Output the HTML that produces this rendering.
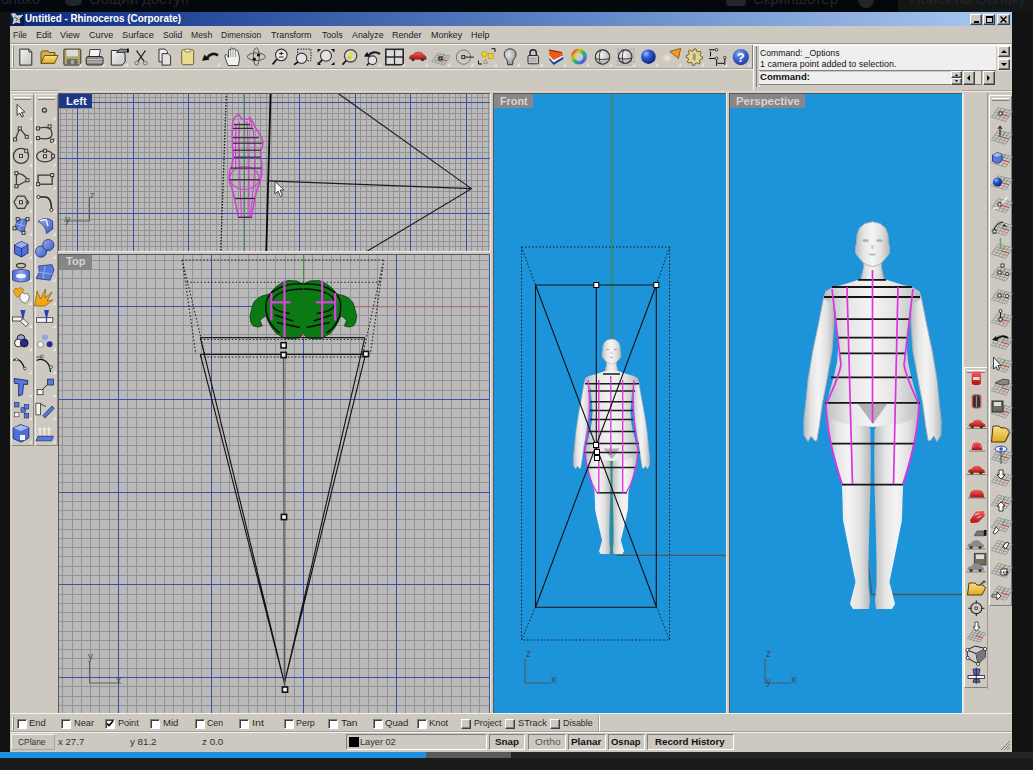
<!DOCTYPE html><html><head><meta charset="utf-8"><style>
*{margin:0;padding:0;box-sizing:border-box}
html,body{width:1033px;height:770px;overflow:hidden;background:#121212;font-family:"Liberation Sans", sans-serif;font-size:11px;color:#000}
.a{position:absolute}
.t{position:absolute;white-space:nowrap;line-height:1}
svg{position:absolute;left:0;top:0;overflow:visible}
</style></head><body><div id="root" style="position:absolute;left:0;top:0;width:1033px;height:770px;overflow:hidden"><svg width="0" height="0" style="position:absolute"><defs><linearGradient id="skin" x1="0" y1="0" x2="1" y2="0"><stop offset="0" stop-color="#b9bcbf"/><stop offset="0.25" stop-color="#e6e6e6"/><stop offset="0.5" stop-color="#f4f4f4"/><stop offset="0.75" stop-color="#e2e2e2"/><stop offset="1" stop-color="#b5b8bb"/></linearGradient></defs></svg><div class="a" style="left:0;top:0;width:1033px;height:12px;background:#03080d;overflow:hidden"><div class="a" style="left:898px;top:0;width:135px;height:12px;background:#151616"></div><div class="t" style="left:-11.0px;top:-8.6px;font-size:15px;font-weight:normal;color:#22262a;transform:scaleX(0.985);transform-origin:0 0;">Облако</div><div class="t" style="left:89.0px;top:-8.6px;font-size:15px;font-weight:normal;color:#22262a;transform:scaleX(0.992);transform-origin:0 0;">Общий доступ</div><div class="t" style="left:753.0px;top:-8.6px;font-size:15px;font-weight:normal;color:#22262a;transform:scaleX(0.990);transform-origin:0 0;">Скриншотер</div><div class="t" style="left:910.0px;top:-8.6px;font-size:15px;font-weight:normal;color:#22262a;transform:scaleX(0.989);transform-origin:0 0;">Поиск по Облаку</div><div class="a" style="left:65px;top:-3px;width:17px;height:9px;border-radius:50%;background:#22262a"></div><div class="a" style="left:726px;top:-6px;width:20px;height:12px;border-radius:4px;background:#22262a"></div><div class="a" style="left:858px;top:-8px;width:16px;height:16px;border-radius:50%;background:#22262a"></div></div><div class="a" style="left:10px;top:12px;width:1002px;height:740px;background:#cdc9c1"></div><div class="a" style="left:10px;top:12px;width:1002px;height:14px;background:linear-gradient(90deg,#0c2a78 0%,#2a4c9c 20%,#5f83c4 55%,#a8caf0 100%)"></div><div class="a" style="left:10px;top:12px;width:14px;height:14px;background:#0b1d4d"></div><svg width="1033" height="770" style="left:0;top:0"><g transform="translate(11,13)"><path d="M0.5 1 L4 0.5 L6 3 L12 2 L8 6 L9 10 L5 9 L2 11 L3 6 Z" fill="#c8c8c8" stroke="#eee" stroke-width="0.6"/><path d="M3 4 L7 6 L5 8" fill="none" stroke="#555" stroke-width="1"/></g></svg><div class="t" style="left:24.5px;top:14.3px;font-size:10px;font-weight:bold;color:#fff;transform:scaleX(0.985);transform-origin:0 0;">Untitled - Rhinoceros (Corporate)</div><div class="a" style="left:970px;top:14px;width:12px;height:11px;background:#cdc9c1;border-top:1px solid #fff;border-left:1px solid #fff;border-right:1px solid #404040;border-bottom:1px solid #404040;box-shadow:inset -1px -1px 0 #808080;"></div><div class="a" style="left:983px;top:14px;width:12px;height:11px;background:#cdc9c1;border-top:1px solid #fff;border-left:1px solid #fff;border-right:1px solid #404040;border-bottom:1px solid #404040;box-shadow:inset -1px -1px 0 #808080;"></div><div class="a" style="left:997px;top:14px;width:13px;height:11px;background:#cdc9c1;border-top:1px solid #fff;border-left:1px solid #fff;border-right:1px solid #404040;border-bottom:1px solid #404040;box-shadow:inset -1px -1px 0 #808080;"></div><div class="a" style="left:974px;top:21px;width:5px;height:2px;background:#000"></div><div class="a" style="left:986px;top:16px;width:7px;height:7px;border:1px solid #000;border-top-width:2px"></div><svg width="1033" height="770"><path d="M1000.5 16.5 L1006.5 22.5 M1006.5 16.5 L1000.5 22.5" stroke="#000" stroke-width="1.5"/></svg><div class="t" style="left:12.8px;top:30.7px;font-size:9.3px;font-weight:normal;color:#222;transform:scaleX(0.921);transform-origin:0 0;">File</div><div class="t" style="left:35.7px;top:30.7px;font-size:9.3px;font-weight:normal;color:#222;transform:scaleX(0.973);transform-origin:0 0;">Edit</div><div class="t" style="left:60.4px;top:30.7px;font-size:9.3px;font-weight:normal;color:#222;transform:scaleX(0.976);transform-origin:0 0;">View</div><div class="t" style="left:88.9px;top:30.7px;font-size:9.3px;font-weight:normal;color:#222;transform:scaleX(0.983);transform-origin:0 0;">Curve</div><div class="t" style="left:122.0px;top:30.7px;font-size:9.3px;font-weight:normal;color:#222;transform:scaleX(0.992);transform-origin:0 0;">Surface</div><div class="t" style="left:162.5px;top:30.7px;font-size:9.3px;font-weight:normal;color:#222;transform:scaleX(0.928);transform-origin:0 0;">Solid</div><div class="t" style="left:191.1px;top:30.7px;font-size:9.3px;font-weight:normal;color:#222;transform:scaleX(0.933);transform-origin:0 0;">Mesh</div><div class="t" style="left:221.3px;top:30.7px;font-size:9.3px;font-weight:normal;color:#222;transform:scaleX(0.913);transform-origin:0 0;">Dimension</div><div class="t" style="left:271.2px;top:30.7px;font-size:9.3px;font-weight:normal;color:#222;transform:scaleX(0.966);transform-origin:0 0;">Transform</div><div class="t" style="left:321.5px;top:30.7px;font-size:9.3px;font-weight:normal;color:#222;transform:scaleX(0.949);transform-origin:0 0;">Tools</div><div class="t" style="left:351.5px;top:30.7px;font-size:9.3px;font-weight:normal;color:#222;transform:scaleX(0.955);transform-origin:0 0;">Analyze</div><div class="t" style="left:392.3px;top:30.7px;font-size:9.3px;font-weight:normal;color:#222;transform:scaleX(0.967);transform-origin:0 0;">Render</div><div class="t" style="left:430.9px;top:30.7px;font-size:9.3px;font-weight:normal;color:#222;transform:scaleX(0.961);transform-origin:0 0;">Monkey</div><div class="t" style="left:471.4px;top:30.7px;font-size:9.3px;font-weight:normal;color:#222;transform:scaleX(0.962);transform-origin:0 0;">Help</div><div class="a" style="left:10px;top:43px;width:1002px;height:1px;background:#9a978f"></div><div class="a" style="left:10px;top:44px;width:1002px;height:1px;background:#f4f2ee"></div><div class="a" style="left:10px;top:68px;width:743px;height:1px;background:#a4a19a"></div><div class="a" style="left:10px;top:69px;width:743px;height:1px;background:#f0eee8"></div><div class="a" style="left:12px;top:47px;width:2px;height:20px;border-left:1px solid #fff;border-right:1px solid #808080"></div><div class="a" style="left:752px;top:45px;width:2px;height:24px;border-left:1px solid #808080;border-right:1px solid #fff"></div><div class="a" style="left:10px;top:90px;width:48px;height:1px;background:#a4a19a"></div><div class="a" style="left:10px;top:91px;width:48px;height:1px;background:#f0eee8"></div><div class="a" style="left:962px;top:90px;width:50px;height:1px;background:#a4a19a"></div><div class="a" style="left:962px;top:91px;width:50px;height:1px;background:#f0eee8"></div><div class="a" style="left:58px;top:91px;width:904px;height:1px;background:#dcd9d3"></div><div class="a" style="left:753px;top:45px;width:258px;height:45px;background:#cdc9c1;border-left:1px solid #fff;border-top:1px solid #fff"></div><div class="a" style="left:756px;top:46px;width:4px;height:41px;border-left:1px solid #808080;border-right:1px solid #fff"></div><div class="a" style="left:759px;top:46px;width:237px;height:25px;background:#efefef;border-bottom:1px solid #808080"></div><div class="t" style="left:759.5px;top:48.6px;font-size:9px;font-weight:normal;color:#111;transform:scaleX(0.963);transform-origin:0 0;">Command: _Options</div><div class="t" style="left:759.5px;top:60.4px;font-size:9px;font-weight:normal;color:#111;transform:scaleX(0.992);transform-origin:0 0;">1 camera point added to selection.</div><div class="a" style="left:997px;top:46px;width:14px;height:25px;background:#e6e4df"></div><div class="a" style="left:998px;top:46px;width:12px;height:11px;background:#cdc9c1;border-top:1px solid #fff;border-left:1px solid #fff;border-right:1px solid #404040;border-bottom:1px solid #404040;box-shadow:inset -1px -1px 0 #808080;"></div><div class="a" style="left:998px;top:59px;width:12px;height:11px;background:#cdc9c1;border-top:1px solid #fff;border-left:1px solid #fff;border-right:1px solid #404040;border-bottom:1px solid #404040;box-shadow:inset -1px -1px 0 #808080;"></div><svg width="1033" height="770"><path d="M1001 53 L1007 53 L1004 50 Z M1001 63 L1007 63 L1004 66 Z" fill="#000"/></svg><div class="a" style="left:759px;top:72px;width:193px;height:13px;background:#efefef;border-bottom:1px solid #808080"></div><div class="t" style="left:759.5px;top:72.6px;font-size:9px;font-weight:bold;color:#111;transform:scaleX(1.064);transform-origin:0 0;">Command:</div><div class="a" style="left:951px;top:71px;width:11px;height:7px;background:#cdc9c1;border-top:1px solid #fff;border-left:1px solid #fff;border-right:1px solid #404040;border-bottom:1px solid #404040;box-shadow:inset -1px -1px 0 #808080;"></div><div class="a" style="left:951px;top:78px;width:11px;height:7px;background:#cdc9c1;border-top:1px solid #fff;border-left:1px solid #fff;border-right:1px solid #404040;border-bottom:1px solid #404040;box-shadow:inset -1px -1px 0 #808080;"></div><svg width="1033" height="770"><path d="M955 76 L958 76 L956.5 74 Z M955 80 L958 80 L956.5 82 Z" fill="#000"/></svg><div class="a" style="left:963px;top:71px;width:12px;height:14px;background:#cdc9c1;border-top:1px solid #fff;border-left:1px solid #fff;border-right:1px solid #404040;border-bottom:1px solid #404040;box-shadow:inset -1px -1px 0 #808080;"></div><div class="a" style="left:975px;top:71px;width:7px;height:14px;background:#dedbd5;border-right:1px solid #808080;border-bottom:1px solid #808080"></div><div class="a" style="left:983px;top:71px;width:12px;height:14px;background:#cdc9c1;border-top:1px solid #fff;border-left:1px solid #fff;border-right:1px solid #404040;border-bottom:1px solid #404040;box-shadow:inset -1px -1px 0 #808080;"></div><svg width="1033" height="770"><path d="M967 78 L970 75 L970 81 Z M990 78 L987 75 L987 81 Z" fill="#000"/></svg><div class="a" style="left:10px;top:93px;width:48px;height:620px;background:#cdc9c1"></div><div class="a" style="left:11px;top:94px;width:23px;height:352px;border-left:1px solid #eceae5;border-top:1px solid #eceae5;border-right:1px solid #8a8882;border-bottom:1px solid #8a8882"></div><div class="a" style="left:14px;top:97px;width:17px;height:3px;border-top:1px solid #fff;border-bottom:1px solid #808080"></div><div class="a" style="left:35px;top:94px;width:23px;height:352px;border-left:1px solid #eceae5;border-top:1px solid #eceae5;border-right:1px solid #8a8882;border-bottom:1px solid #8a8882"></div><div class="a" style="left:38px;top:97px;width:17px;height:3px;border-top:1px solid #fff;border-bottom:1px solid #808080"></div><div class="a" style="left:962px;top:93px;width:50px;height:620px;background:#cdc9c1"></div><div class="a" style="left:964px;top:367px;width:24px;height:321px;border-left:1px solid #fff;border-top:1px solid #fff;border-right:1px solid #808080;border-bottom:1px solid #808080"></div><div class="a" style="left:962px;top:93px;width:2px;height:620px;background:#e8e6e2"></div><div class="a" style="left:987px;top:93px;width:1px;height:596px;background:#9a9892"></div><div class="a" style="left:989px;top:95px;width:23px;height:511px;border-left:1px solid #fff;border-top:1px solid #fff;border-right:1px solid #808080;border-bottom:1px solid #808080"></div><div class="a" style="left:992px;top:98px;width:17px;height:3px;border-top:1px solid #fff;border-bottom:1px solid #808080"></div><div class="a" style="left:967px;top:370px;width:18px;height:3px;border-top:1px solid #fff;border-bottom:1px solid #808080"></div><svg width="1033" height="770"><defs><clipPath id="cl"><rect x="58" y="93" width="432" height="158"/></clipPath></defs><g clip-path="url(#cl)"><rect x="58" y="93" width="432" height="158" fill="#bababa"/><path d="M60.5 93V251M66.5 93V251M72.5 93V251M83.5 93V251M88.5 93V251M94.5 93V251M99.5 93V251M105.5 93V251M110.5 93V251M116.5 93V251M121.5 93V251M127.5 93V251M138.5 93V251M144.5 93V251M149.5 93V251M155.5 93V251M160.5 93V251M166.5 93V251M171.5 93V251M177.5 93V251M183.5 93V251M194.5 93V251M199.5 93V251M205.5 93V251M210.5 93V251M216.5 93V251M221.5 93V251M227.5 93V251M232.5 93V251M238.5 93V251M249.5 93V251M255.5 93V251M260.5 93V251M266.5 93V251M271.5 93V251M277.5 93V251M282.5 93V251M288.5 93V251M294.5 93V251M305.5 93V251M310.5 93V251M316.5 93V251M321.5 93V251M327.5 93V251M332.5 93V251M338.5 93V251M344.5 93V251M349.5 93V251M360.5 93V251M366.5 93V251M371.5 93V251M377.5 93V251M382.5 93V251M388.5 93V251M393.5 93V251M399.5 93V251M405.5 93V251M416.5 93V251M421.5 93V251M427.5 93V251M432.5 93V251M438.5 93V251M443.5 93V251M449.5 93V251M455.5 93V251M460.5 93V251M471.5 93V251M477.5 93V251M482.5 93V251M488.5 93V251M58 97.5H490M58 108.5H490M58 113.5H490M58 119.5H490M58 125.5H490M58 130.5H490M58 136.5H490M58 141.5H490M58 147.5H490M58 152.5H490M58 163.5H490M58 169.5H490M58 174.5H490M58 180.5H490M58 186.5H490M58 191.5H490M58 197.5H490M58 202.5H490M58 208.5H490M58 219.5H490M58 224.5H490M58 230.5H490M58 235.5H490M58 241.5H490M58 246.5H490" stroke="#939393" stroke-width="1" fill="none"/><path d="M77.5 93V251M133.5 93V251M188.5 93V251M244.5 93V251M299.5 93V251M355.5 93V251M410.5 93V251M466.5 93V251M58 102.5H490M58 158.5H490M58 213.5H490" stroke="#3d4fa8" stroke-width="1" fill="none"/><path d="M244.1 93V251" stroke="#5f8f5f" stroke-width="1.3"/><path d="M226.4 93 L220.7 251" stroke="#1a1a1a" stroke-width="1.3" stroke-dasharray="1.6 1.4" fill="none"/><path d="M270.6 93 L266.3 251" stroke="#0a0a0a" stroke-width="1.8" fill="none"/><path d="M239 114.5 C236 116 233.5 118 233 121 C232 128 232 145 233 152 C233.5 157 233 160 232 165 C229.5 170 228.5 176 229.5 181 C230.5 186 233 190 234 196 C235.5 203 237 210 238.4 217.3 L251.6 217.3 C252.5 210 254 203 255 198 C256 192 258.5 186 260.5 180 C262 174 262.5 168 261.5 162 C261 157 260 153 261 150 C263 146 263.5 142 262 139 C260.5 135 257.5 131 255 127 C253 123 251.5 120 250 117.5 C247.5 119.5 244 120.5 241 118 Z" fill="none" stroke="#d83ad8" stroke-width="1.5"/><path d="M236 126 C235 145 236 160 235.5 170 M239.5 122 C239 150 240 190 241.5 216 M247 121 C248 140 249 170 248 216 M253 128 C256 150 256 175 250 216 M250 118 L252 128" stroke="#d83ad8" stroke-width="1.1" fill="none"/><ellipse cx="244.5" cy="178" rx="14.5" ry="11.5" fill="none" stroke="#d83ad8" stroke-width="1.1"/><path d="M234 124.5H250" stroke="#2e2e2e" stroke-width="1.2"/><path d="M233 128.4H253" stroke="#2e2e2e" stroke-width="1.2"/><path d="M233 137.7H259" stroke="#2e2e2e" stroke-width="1.2"/><path d="M233 143.2H262" stroke="#2e2e2e" stroke-width="1.2"/><path d="M233 150.2H260.5" stroke="#2e2e2e" stroke-width="1.2"/><path d="M234 157.2H260.5" stroke="#2e2e2e" stroke-width="1.2"/><path d="M230.5 168.1H261.5" stroke="#2e2e2e" stroke-width="1.2"/><path d="M229.5 179.8H260" stroke="#2e2e2e" stroke-width="1.2"/><path d="M235 198.5H255" stroke="#2e2e2e" stroke-width="1.2"/><path d="M238.4 217.3H251.6" stroke="#2e2e2e" stroke-width="1.2"/><path d="M268 180.9 L471.4 188.6 M337.5 93 L471.4 188.6 L367.5 251" stroke="#1a1a1a" stroke-width="1.1" fill="none"/><path d="M89.5 197 V221 H64" stroke="#606060" stroke-width="1" fill="none"/></g></svg><div class="t" style="left:90px;top:191px;font-size:9px;color:#505050">z</div><div class="t" style="left:65px;top:215px;font-size:10px;color:#505050">y</div><svg width="1033" height="770"><path d="M275 181.4 L275 194 L278 191 L280.5 196.5 L282.5 195.5 L280 190 L284 190 Z" fill="#fff" stroke="#222" stroke-width="0.8"/></svg><div class="a" style="left:58px;top:93px;width:34px;height:15px;background:#1c3786"></div><div class="t" style="left:65.5px;top:95.8px;font-size:11px;font-weight:bold;color:#f4f4f4;transform:scaleX(1.031);transform-origin:0 0;">Left</div><div class="a" style="left:58px;top:93px;width:432px;height:1px;background:#5a5a5a"></div><div class="a" style="left:58px;top:93px;width:1px;height:158px;background:#5a5a5a"></div><div class="a" style="left:490px;top:93px;width:1px;height:159px;background:#ecebe8"></div><div class="a" style="left:58px;top:251px;width:433px;height:1px;background:#ecebe8"></div><svg width="1033" height="770"><defs><clipPath id="ct"><rect x="58" y="254" width="432" height="459"/></clipPath></defs><g clip-path="url(#ct)"><rect x="58" y="254" width="432" height="459" fill="#bababa"/><path d="M62.5 254V713M72.5 254V713M81.5 254V713M90.5 254V713M99.5 254V713M109.5 254V713M127.5 254V713M136.5 254V713M146.5 254V713M155.5 254V713M164.5 254V713M173.5 254V713M183.5 254V713M192.5 254V713M201.5 254V713M220.5 254V713M229.5 254V713M238.5 254V713M248.5 254V713M257.5 254V713M266.5 254V713M275.5 254V713M285.5 254V713M294.5 254V713M312.5 254V713M322.5 254V713M331.5 254V713M340.5 254V713M350.5 254V713M359.5 254V713M368.5 254V713M377.5 254V713M387.5 254V713M405.5 254V713M414.5 254V713M424.5 254V713M433.5 254V713M442.5 254V713M451.5 254V713M461.5 254V713M470.5 254V713M479.5 254V713M58 260.5H490M58 269.5H490M58 278.5H490M58 288.5H490M58 297.5H490M58 315.5H490M58 325.5H490M58 334.5H490M58 343.5H490M58 353.5H490M58 362.5H490M58 371.5H490M58 380.5H490M58 390.5H490M58 408.5H490M58 417.5H490M58 427.5H490M58 436.5H490M58 445.5H490M58 455.5H490M58 464.5H490M58 473.5H490M58 482.5H490M58 501.5H490M58 510.5H490M58 519.5H490M58 529.5H490M58 538.5H490M58 547.5H490M58 556.5H490M58 566.5H490M58 575.5H490M58 594.5H490M58 603.5H490M58 612.5H490M58 621.5H490M58 631.5H490M58 640.5H490M58 649.5H490M58 658.5H490M58 668.5H490M58 686.5H490M58 696.5H490M58 705.5H490" stroke="#939393" stroke-width="1" fill="none"/><path d="M118.5 254V713M211.5 254V713M303.5 254V713M396.5 254V713M489.5 254V713M58 306.5H490M58 399.5H490M58 492.5H490M58 584.5H490M58 677.5H490" stroke="#3d4fa8" stroke-width="1" fill="none"/><path d="M303.7 254V306.7" stroke="#3f9a3f" stroke-width="1.3"/><path d="M303.7 306.7H490" stroke="#b07070" stroke-width="1.3"/><path d="M182.2 260 H383.8 M186.7 282.3 H380.5 M182.2 260 L195.8 354 M182.2 260 L204.8 354 M383.8 260 L362.9 354 M383.8 260 L370.4 354 M200.3 339.5 H365 M200.3 357 H366" stroke="#222" stroke-width="1.1" stroke-dasharray="1.5 2" fill="none"/><path d="M303.3 284.5 L297.0 281.0 L287.7 280.5 L280.0 284.0 L275.0 287.7 L269.5 294.0 L262.0 296.0 L258.6 297.7 L254.0 302.0 L252.3 306.8 L250.0 315.9 L250.8 322.0 L253.2 325.9 L258.0 327.0 L262.3 325.9 L260.0 320.5 L263.0 317.5 L265.9 315.9 L268.6 322.3 L272.0 328.0 L275.9 333.2 L285.0 338.6 L293.0 339.0 L299.5 337.7 L303.3 334.0 L303.3 334.0 L307.1 337.7 L313.6 339.0 L321.6 338.6 L330.7 333.2 L334.6 328.0 L338.0 322.3 L340.7 315.9 L343.6 317.5 L346.6 320.5 L344.3 325.9 L348.6 327.0 L353.4 325.9 L355.8 322.0 L356.6 315.9 L354.3 306.8 L352.6 302.0 L348.0 297.7 L344.6 296.0 L337.1 294.0 L331.6 287.7 L326.6 284.0 L318.9 280.5 L309.6 281.0 L303.3 284.5Z" fill="#0b7a14" stroke="#0a3a0a" stroke-width="0.8" stroke-linejoin="round"/><path d="M303 284 C285 283 268 290 266 303 C265 315 270 326 280 333" fill="none" stroke="#0a0a0a" stroke-width="1.4"/><path d="M 303.6 284.0 C 321.6 283.0 338.6 290.0 340.6 303.0 C 341.6 315.0 336.6 326.0 326.6 333.0" fill="none" stroke="#0a0a0a" stroke-width="1.4"/><path d="M303 289 C288 289 274 293 271.5 302 C271 308 278 312 290 313.5" fill="none" stroke="#0a0a0a" stroke-width="1.4"/><path d="M 303.6 289.0 C 318.6 289.0 332.6 293.0 335.1 302.0 C 335.6 308.0 328.6 312.0 316.6 313.5" fill="none" stroke="#0a0a0a" stroke-width="1.4"/><path d="M275 315 L293 321" fill="none" stroke="#0a0a0a" stroke-width="1.4"/><path d="M 331.6 315.0 L 313.6 321.0" fill="none" stroke="#0a0a0a" stroke-width="1.4"/><path d="M277 322.5 L300 327.5" fill="none" stroke="#0a0a0a" stroke-width="1.4"/><path d="M 329.6 322.5 L 306.6 327.5" fill="none" stroke="#0a0a0a" stroke-width="1.4"/><path d="M284.5 280.5 V337.7" fill="none" stroke="#e040e0" stroke-width="2.2"/><path d="M 322.1 280.5 V 337.7" fill="none" stroke="#e040e0" stroke-width="2.2"/><path d="M271.4 293 V320.5" fill="none" stroke="#e040e0" stroke-width="2.2"/><path d="M 335.2 293.0 V 320.5" fill="none" stroke="#e040e0" stroke-width="2.2"/><path d="M270.5 302.3 H290.5" fill="none" stroke="#e040e0" stroke-width="2.2"/><path d="M 336.1 302.3 H 316.1" fill="none" stroke="#e040e0" stroke-width="2.2"/><path d="M303.3 334 V339" stroke="#d050d0" stroke-width="1.5"/><path d="M200.3 337.6 H364.9 M200.3 354.4 H365.5" fill="none" stroke="#1a1a1a" stroke-width="1.1"/><path d="M200.3 337.6 L284.4 683 M200.3 354.4 L284.4 683 M364.9 337.6 L284.4 683 M365.5 354.4 L284.4 683" stroke="#111" stroke-width="1.1" fill="none"/><path d="M283.6 355 L284.4 683 L285 689" stroke="#5a5a5a" stroke-width="1.4" fill="none"/><rect x="281.0" y="342.7" width="5.2" height="5.2" fill="#f4f4f4" stroke="#111" stroke-width="1.6"/><rect x="281.0" y="352.4" width="5.2" height="5.2" fill="#f4f4f4" stroke="#111" stroke-width="1.6"/><rect x="363.29999999999995" y="351.4" width="5.2" height="5.2" fill="#f4f4f4" stroke="#111" stroke-width="1.6"/><rect x="281.4" y="514.4" width="5.2" height="5.2" fill="#f4f4f4" stroke="#111" stroke-width="1.6"/><rect x="282.4" y="687.0" width="5.2" height="5.2" fill="#f4f4f4" stroke="#111" stroke-width="1.6"/><path d="M89.5 662 V683 H116" stroke="#606060" stroke-width="1" fill="none"/></g></svg><div class="t" style="left:88px;top:652px;font-size:10px;color:#505050">y</div><div class="t" style="left:116px;top:676px;font-size:10px;color:#505050">x</div><div class="a" style="left:58px;top:254px;width:34px;height:16px;background:#868686"></div><div class="t" style="left:66.0px;top:256.4px;font-size:11px;font-weight:bold;color:#d4d4d4;transform:scaleX(1.008);transform-origin:0 0;">Top</div><div class="a" style="left:58px;top:254px;width:432px;height:1px;background:#5a5a5a"></div><div class="a" style="left:58px;top:254px;width:1px;height:459px;background:#5a5a5a"></div><div class="a" style="left:490px;top:254px;width:1px;height:460px;background:#ecebe8"></div><div class="a" style="left:58px;top:713px;width:433px;height:1px;background:#ecebe8"></div><svg width="1033" height="770"><defs><clipPath id="cf"><rect x="493" y="93" width="233" height="620"/></clipPath></defs><g clip-path="url(#cf)"><rect x="493" y="93" width="233" height="620" fill="#1d94d9"/><path d="M611.6 93 V555" stroke="#3a8a70" stroke-width="2"/><path d="M616.5 555.3 H726" stroke="#555" stroke-width="1.2"/><path d="M521.5 247 H669.6 V640 H521.5 Z M521.5 247 L535.5 285 M669.6 247 L656.3 285 M535.5 607 L521.5 640 M656.5 607 L669.6 640" stroke="#1a1a1a" stroke-width="1" stroke-dasharray="1.5 2" fill="none"/><path d="M607.1 357.6 L606.5 364.9 L604.8 372.2 L611.5 372.8 L618.2 372.2 L616.5 364.9 L615.9 357.6 Z" fill="url(#skin)" stroke="#a8aeb4" stroke-width="0.6" stroke-linejoin="round"/><path d="M611.5 364.1 L609.0 363.5 L606.5 362.1 L604.6 359.9 L603.2 358.2 L602.1 356.5 L602.1 353.1 L602.6 350.9 L602.9 346.4 L604.3 342.5 L607.3 340.0 L611.5 339.0 L615.7 340.0 L618.7 342.5 L620.1 346.4 L620.4 350.9 L620.9 353.1 L620.9 356.5 L619.8 358.2 L618.4 359.9 L616.5 362.1 L614.0 363.5 L611.5 364.1 Z" fill="url(#skin)" stroke="#a8aeb4" stroke-width="0.6" stroke-linejoin="round"/><path d="M585.7 377.9 L584.2 382.7 L581.5 398.5 L578.3 415.6 L575.7 433.4 L574.4 448.2 L573.4 457.2 L573.5 465.4 L575.7 469.0 L577.4 465.9 L579.6 468.6 L580.7 468.1 L582.0 460.0 L583.6 448.2 L585.7 436.6 L587.6 424.1 L589.0 415.6 L590.1 398.5 L590.1 386.6 Z" fill="url(#skin)" stroke="#a8aeb4" stroke-width="0.6" stroke-linejoin="round"/><path d="M632.9 386.6 L632.9 398.5 L634.0 415.6 L635.4 424.1 L637.3 436.6 L639.4 448.2 L641.0 460.0 L642.3 468.1 L643.4 468.6 L645.6 465.9 L647.3 469.0 L649.5 465.4 L649.6 457.2 L648.6 448.2 L647.3 433.4 L644.7 415.6 L641.5 398.5 L638.8 382.7 L637.3 377.9 Z" fill="url(#skin)" stroke="#a8aeb4" stroke-width="0.6" stroke-linejoin="round"/><path d="M585.7 449.5 L586.2 460.0 L588.5 469.5 L591.2 480.0 L594.5 491.7 L594.8 499.8 L595.1 509.8 L597.3 519.7 L599.6 529.7 L602.1 540.6 L600.1 547.5 L599.0 551.5 L600.7 554.0 L609.6 554.0 L610.1 549.5 L609.3 542.1 L609.3 529.7 L609.8 509.8 L610.4 491.9 L610.6 478.9 L610.4 462.7 L608.4 456.2 L601.8 450.7 L593.5 448.4 Z" fill="url(#skin)" stroke="none" stroke-linejoin="round"/><path d="M629.5 448.4 L621.2 450.7 L614.6 456.2 L612.6 462.7 L612.4 478.9 L612.6 491.9 L613.2 509.8 L613.7 529.7 L613.7 542.1 L612.9 549.5 L613.4 554.0 L622.3 554.0 L624.0 551.5 L622.9 547.5 L620.9 540.6 L623.4 529.7 L625.7 519.7 L627.9 509.8 L628.2 499.8 L628.5 491.7 L631.8 480.0 L634.5 469.5 L636.8 460.0 L637.3 449.5 Z" fill="url(#skin)" stroke="none" stroke-linejoin="round"/><path d="M605.1 371.1 L596.2 373.9 L589.0 375.9 L585.7 377.9 L584.3 382.2 L587.9 385.3 L590.7 388.5 L591.5 398.5 L592.6 411.6 L591.8 422.2 L590.1 430.9 L587.9 439.7 L585.7 449.5 L587.3 456.2 L596.2 459.4 L607.3 460.5 L611.5 461.0 L611.5 461.0 L615.7 460.5 L626.8 459.4 L635.7 456.2 L637.3 449.5 L635.1 439.7 L632.9 430.9 L631.2 422.2 L630.4 411.6 L631.5 398.5 L632.3 388.5 L635.1 385.3 L638.7 382.2 L637.3 377.9 L634.0 375.9 L626.8 373.9 L617.9 371.1 Z" fill="url(#skin)" stroke="none" stroke-linejoin="round"/><path d="M603.4 448.4 L619.6 448.4 L611.8 459.4 Z" fill="#9c9c9c" opacity="0.75"/><ellipse cx="607.6" cy="349.5" rx="1.78" ry="0.72" fill="#9a9a9a" opacity="0.75"/><ellipse cx="615.4" cy="349.5" rx="1.78" ry="0.72" fill="#9a9a9a" opacity="0.75"/><ellipse cx="611.5" cy="353.1" rx="0.78" ry="1.22" fill="#b8b8b8" opacity="0.7"/><ellipse cx="611.5" cy="357.4" rx="1.94" ry="0.61" fill="#a0a0a0" opacity="0.7"/><path d="M603 374H620" stroke="#1a1a1a" stroke-width="1.5"/><path d="M585 383.8H639" stroke="#1a1a1a" stroke-width="1.5"/><path d="M588 391H635" stroke="#1a1a1a" stroke-width="1.5"/><path d="M590 401.7H633" stroke="#1a1a1a" stroke-width="1.5"/><path d="M590 410.6H633" stroke="#1a1a1a" stroke-width="1.5"/><path d="M590 419.6H633" stroke="#1a1a1a" stroke-width="1.5"/><path d="M588 431.6H636" stroke="#1a1a1a" stroke-width="1.5"/><path d="M585 443.5H639" stroke="#1a1a1a" stroke-width="1.5"/><path d="M584 452.5H640" stroke="#1a1a1a" stroke-width="1.5"/><path d="M588 467.4H636" stroke="#1a1a1a" stroke-width="1.5"/><path d="M597 492.8H627" stroke="#1a1a1a" stroke-width="1.5"/><path d="M588 380 C591 400 590 420 585 450 C586 470 592 485 597 493 M598.8 380 V493 M610.8 376 V455 M622.7 380 V493 M634 380 C632 400 633 420 638 450 C637 470 631 485 626 493" stroke="#e030e0" stroke-width="1.3" fill="none"/><path d="M535.5 285 H656.3 V607.2 H535.5 Z M535.5 285 L656.6 607.2 M656.3 285 L535.5 607.2 M596.3 285 V452" stroke="#111" stroke-width="1.1" fill="none"/><rect x="593.8" y="282.5" width="5" height="5" fill="#fff" stroke="#000" stroke-width="1"/><rect x="653.8" y="282.5" width="5" height="5" fill="#fff" stroke="#000" stroke-width="1"/><rect x="593.5" y="442.5" width="5" height="5" fill="#fff" stroke="#000" stroke-width="1"/><rect x="594.5" y="449.5" width="5" height="5" fill="#fff" stroke="#000" stroke-width="1"/><rect x="594.5" y="455.5" width="5" height="5" fill="#fff" stroke="#000" stroke-width="1"/><path d="M525 658 V683 H550" stroke="#555" stroke-width="1" fill="none"/></g></svg><div class="t" style="left:526px;top:649px;font-size:10px;color:#4a4a4a">z</div><div class="t" style="left:551px;top:674px;font-size:11px;color:#4a4a4a">x</div><div class="a" style="left:493px;top:93px;width:40px;height:15px;background:#878787"></div><div class="t" style="left:500.3px;top:95.7px;font-size:11px;font-weight:bold;color:#d6d6d6;transform:scaleX(0.985);transform-origin:0 0;">Front</div><div class="a" style="left:493px;top:93px;width:233px;height:1px;background:#5a5a5a"></div><div class="a" style="left:493px;top:93px;width:1px;height:620px;background:#5a5a5a"></div><div class="a" style="left:726px;top:93px;width:1px;height:621px;background:#ecebe8"></div><div class="a" style="left:493px;top:713px;width:234px;height:1px;background:#ecebe8"></div><svg width="1033" height="770"><defs><clipPath id="cp"><rect x="729" y="93" width="233" height="620"/></clipPath></defs><g clip-path="url(#cp)"><rect x="729" y="93" width="233" height="620" fill="#1d94d9"/><path d="M867 554.5 L871.8 594.5 H962" stroke="#555" stroke-width="1.3" fill="none"/><path d="M864.5 255.0 L863.5 268.0 L860.5 281.0 L872.5 282.0 L884.5 281.0 L881.5 268.0 L880.5 255.0 Z" fill="url(#skin)" stroke="#a8aeb4" stroke-width="0.9" stroke-linejoin="round"/><path d="M872.5 266.5 L868.0 265.5 L863.5 263.0 L860.0 259.0 L857.5 256.0 L855.5 253.0 L855.5 247.0 L856.5 243.0 L857.0 235.0 L859.5 228.0 L865.0 223.5 L872.5 221.8 L880.0 223.5 L885.5 228.0 L888.0 235.0 L888.5 243.0 L889.5 247.0 L889.5 253.0 L887.5 256.0 L885.0 259.0 L881.5 263.0 L877.0 265.5 L872.5 266.5 Z" fill="url(#skin)" stroke="#a8aeb4" stroke-width="0.9" stroke-linejoin="round"/><path d="M826.0 291.0 L823.4 298.8 L818.5 324.0 L812.7 351.4 L808.0 380.0 L805.7 403.7 L803.8 420.0 L804.0 435.0 L808.0 441.7 L811.0 436.0 L815.0 441.0 L817.0 440.0 L819.4 425.0 L822.3 403.7 L826.0 385.0 L829.5 365.0 L832.0 351.4 L834.0 324.0 L834.0 305.0 Z" fill="url(#skin)" stroke="#a8aeb4" stroke-width="0.9" stroke-linejoin="round"/><path d="M911.0 305.0 L911.0 324.0 L913.0 351.4 L915.5 365.0 L919.0 385.0 L922.7 403.7 L925.6 425.0 L928.0 440.0 L930.0 441.0 L934.0 436.0 L937.0 441.7 L941.0 435.0 L941.2 420.0 L939.3 403.7 L937.0 380.0 L932.3 351.4 L926.5 324.0 L921.6 298.8 L919.0 291.0 Z" fill="url(#skin)" stroke="#a8aeb4" stroke-width="0.9" stroke-linejoin="round"/><path d="M826.0 405.7 L827.0 425.0 L831.0 442.7 L836.0 462.0 L841.8 483.7 L842.5 500.0 L843.0 520.0 L847.0 540.0 L851.0 560.0 L855.5 582.0 L852.0 596.0 L850.0 604.0 L853.0 609.0 L869.0 609.0 L870.0 600.0 L868.5 585.0 L868.5 560.0 L869.5 520.0 L870.5 484.0 L870.8 460.0 L870.5 430.0 L867.0 418.0 L855.0 408.0 L840.0 404.0 Z" fill="url(#skin)" stroke="none" stroke-linejoin="round"/><path d="M905.0 404.0 L890.0 408.0 L878.0 418.0 L874.5 430.0 L874.2 460.0 L874.5 484.0 L875.5 520.0 L876.5 560.0 L876.5 585.0 L875.0 600.0 L876.0 609.0 L892.0 609.0 L895.0 604.0 L893.0 596.0 L889.5 582.0 L894.0 560.0 L898.0 540.0 L902.0 520.0 L902.5 500.0 L903.2 483.7 L909.0 462.0 L914.0 442.7 L918.0 425.0 L919.0 405.7 Z" fill="url(#skin)" stroke="none" stroke-linejoin="round"/><path d="M861.0 279.0 L845.0 284.0 L832.0 287.5 L826.0 291.0 L823.5 298.0 L830.0 303.0 L835.0 308.0 L836.5 324.0 L838.5 345.0 L837.0 362.0 L834.0 376.0 L830.0 390.0 L826.0 405.7 L829.0 418.0 L845.0 424.0 L865.0 426.0 L872.5 427.0 L872.5 427.0 L880.0 426.0 L900.0 424.0 L916.0 418.0 L919.0 405.7 L915.0 390.0 L911.0 376.0 L908.0 362.0 L906.5 345.0 L908.5 324.0 L910.0 308.0 L915.0 303.0 L921.5 298.0 L919.0 291.0 L913.0 287.5 L900.0 284.0 L884.0 279.0 Z" fill="url(#skin)" stroke="none" stroke-linejoin="round"/><path d="M858.0 404.0 L887.0 404.0 L873.0 424.0 Z" fill="#9c9c9c" opacity="0.75"/><ellipse cx="865.5" cy="240.5" rx="3.20" ry="1.30" fill="#9a9a9a" opacity="0.75"/><ellipse cx="879.5" cy="240.5" rx="3.20" ry="1.30" fill="#9a9a9a" opacity="0.75"/><ellipse cx="872.5" cy="247.0" rx="1.40" ry="2.20" fill="#b8b8b8" opacity="0.7"/><ellipse cx="872.5" cy="254.5" rx="3.50" ry="1.10" fill="#a0a0a0" opacity="0.7"/><path d="M858 279.9H886" stroke="#151515" stroke-width="1.8"/><path d="M832 287H912" stroke="#151515" stroke-width="1.8"/><path d="M824 297H920" stroke="#151515" stroke-width="1.8"/><path d="M835 319.2H910" stroke="#151515" stroke-width="1.8"/><path d="M838 337.7H907" stroke="#151515" stroke-width="1.8"/><path d="M839 353.3H906" stroke="#151515" stroke-width="1.8"/><path d="M831 377.4H912" stroke="#151515" stroke-width="1.8"/><path d="M825 402.8H920" stroke="#151515" stroke-width="1.8"/><path d="M831 443.7H915" stroke="#151515" stroke-width="1.8"/><path d="M842 484.6H903" stroke="#151515" stroke-width="1.8"/><path d="M832 289 L841 365 C838 380 830 395 826 405 C828 440 836 465 842 484 M847 287 L852.5 484 M872.5 270 V423 M898 287 L893.5 484 M913 289 L904 365 C907 380 915 395 919 405 C917 440 909 465 903 484" stroke="#e030e0" stroke-width="1.7" fill="none"/><path d="M765 658 V683 H790" stroke="#555" stroke-width="1" fill="none"/></g></svg><div class="t" style="left:766px;top:649px;font-size:10px;color:#4a4a4a">z</div><div class="t" style="left:791px;top:674px;font-size:11px;color:#4a4a4a">x</div><div class="t" style="left:766px;top:677px;font-size:10px;color:#4a4a4a">y</div><div class="a" style="left:729px;top:93px;width:76px;height:15px;background:#878787"></div><div class="t" style="left:736.2px;top:95.7px;font-size:11px;font-weight:bold;color:#d6d6d6;transform:scaleX(1.033);transform-origin:0 0;">Perspective</div><div class="a" style="left:729px;top:93px;width:233px;height:1px;background:#5a5a5a"></div><div class="a" style="left:729px;top:93px;width:1px;height:620px;background:#5a5a5a"></div><div class="a" style="left:962px;top:93px;width:1px;height:621px;background:#ecebe8"></div><div class="a" style="left:729px;top:713px;width:234px;height:1px;background:#ecebe8"></div><div class="a" style="left:10px;top:713px;width:1002px;height:1px;background:#f4f2ee"></div><div class="a" style="left:12px;top:717px;width:2px;height:13px;border-left:1px solid #fff;border-right:1px solid #808080"></div><div class="a" style="left:17px;top:719px;width:10px;height:10px;background:#fff;border-top:1px solid #808080;border-left:1px solid #808080;border-right:1px solid #fff;border-bottom:1px solid #fff;box-shadow:inset 1px 1px 0 #404040"></div><div class="t" style="left:29.0px;top:719.2px;font-size:9.3px;font-weight:normal;color:#2a2a2a;transform:scaleX(1.015);transform-origin:0 0;">End</div><div class="a" style="left:61px;top:719px;width:10px;height:10px;background:#fff;border-top:1px solid #808080;border-left:1px solid #808080;border-right:1px solid #fff;border-bottom:1px solid #fff;box-shadow:inset 1px 1px 0 #404040"></div><div class="t" style="left:73.5px;top:719.2px;font-size:9.3px;font-weight:normal;color:#2a2a2a;transform:scaleX(0.992);transform-origin:0 0;">Near</div><div class="a" style="left:105px;top:719px;width:10px;height:10px;background:#fff;border-top:1px solid #808080;border-left:1px solid #808080;border-right:1px solid #fff;border-bottom:1px solid #fff;box-shadow:inset 1px 1px 0 #404040"></div><svg width="1033" height="770"><path d="M107 723.5 L109 725.5 L113 721" stroke="#000" stroke-width="1.6" fill="none"/></svg><div class="t" style="left:118.0px;top:719.2px;font-size:9.3px;font-weight:normal;color:#2a2a2a;transform:scaleX(0.976);transform-origin:0 0;">Point</div><div class="a" style="left:150px;top:719px;width:10px;height:10px;background:#fff;border-top:1px solid #808080;border-left:1px solid #808080;border-right:1px solid #fff;border-bottom:1px solid #fff;box-shadow:inset 1px 1px 0 #404040"></div><div class="t" style="left:162.5px;top:719.2px;font-size:9.3px;font-weight:normal;color:#2a2a2a;transform:scaleX(1.028);transform-origin:0 0;">Mid</div><div class="a" style="left:195px;top:719px;width:10px;height:10px;background:#fff;border-top:1px solid #808080;border-left:1px solid #808080;border-right:1px solid #fff;border-bottom:1px solid #fff;box-shadow:inset 1px 1px 0 #404040"></div><div class="t" style="left:207.1px;top:719.2px;font-size:9.3px;font-weight:normal;color:#2a2a2a;transform:scaleX(0.949);transform-origin:0 0;">Cen</div><div class="a" style="left:239px;top:719px;width:10px;height:10px;background:#fff;border-top:1px solid #808080;border-left:1px solid #808080;border-right:1px solid #fff;border-bottom:1px solid #fff;box-shadow:inset 1px 1px 0 #404040"></div><div class="t" style="left:251.5px;top:719.2px;font-size:9.3px;font-weight:normal;color:#2a2a2a;transform:scaleX(1.160);transform-origin:0 0;">Int</div><div class="a" style="left:284px;top:719px;width:10px;height:10px;background:#fff;border-top:1px solid #808080;border-left:1px solid #808080;border-right:1px solid #fff;border-bottom:1px solid #fff;box-shadow:inset 1px 1px 0 #404040"></div><div class="t" style="left:296.1px;top:719.2px;font-size:9.3px;font-weight:normal;color:#2a2a2a;transform:scaleX(0.957);transform-origin:0 0;">Perp</div><div class="a" style="left:328px;top:719px;width:10px;height:10px;background:#fff;border-top:1px solid #808080;border-left:1px solid #808080;border-right:1px solid #fff;border-bottom:1px solid #fff;box-shadow:inset 1px 1px 0 #404040"></div><div class="t" style="left:340.8px;top:719.2px;font-size:9.3px;font-weight:normal;color:#2a2a2a;transform:scaleX(1.107);transform-origin:0 0;">Tan</div><div class="a" style="left:373px;top:719px;width:10px;height:10px;background:#fff;border-top:1px solid #808080;border-left:1px solid #808080;border-right:1px solid #fff;border-bottom:1px solid #fff;box-shadow:inset 1px 1px 0 #404040"></div><div class="t" style="left:384.5px;top:719.2px;font-size:9.3px;font-weight:normal;color:#2a2a2a;transform:scaleX(1.029);transform-origin:0 0;">Quad</div><div class="a" style="left:417px;top:719px;width:10px;height:10px;background:#fff;border-top:1px solid #808080;border-left:1px solid #808080;border-right:1px solid #fff;border-bottom:1px solid #fff;box-shadow:inset 1px 1px 0 #404040"></div><div class="t" style="left:429.1px;top:719.2px;font-size:9.3px;font-weight:normal;color:#2a2a2a;transform:scaleX(1.004);transform-origin:0 0;">Knot</div><div class="a" style="left:461px;top:719px;width:10px;height:10px;background:#cdc9c1;border-top:1px solid #fff;border-left:1px solid #fff;border-right:1px solid #404040;border-bottom:1px solid #404040;box-shadow:inset -1px -1px 0 #808080;"></div><div class="t" style="left:474.1px;top:719.2px;font-size:9.3px;font-weight:normal;color:#2a2a2a;transform:scaleX(0.947);transform-origin:0 0;">Project</div><div class="a" style="left:505px;top:719px;width:10px;height:10px;background:#cdc9c1;border-top:1px solid #fff;border-left:1px solid #fff;border-right:1px solid #404040;border-bottom:1px solid #404040;box-shadow:inset -1px -1px 0 #808080;"></div><div class="t" style="left:518.1px;top:719.2px;font-size:9.3px;font-weight:normal;color:#2a2a2a;transform:scaleX(0.996);transform-origin:0 0;">STrack</div><div class="a" style="left:550px;top:719px;width:10px;height:10px;background:#cdc9c1;border-top:1px solid #fff;border-left:1px solid #fff;border-right:1px solid #404040;border-bottom:1px solid #404040;box-shadow:inset -1px -1px 0 #808080;"></div><div class="t" style="left:562.5px;top:719.2px;font-size:9.3px;font-weight:normal;color:#2a2a2a;transform:scaleX(0.961);transform-origin:0 0;">Disable</div><div class="a" style="left:598px;top:715px;width:2px;height:16px;border-left:1px solid #a0a0a0;border-right:1px solid #fff"></div><div class="a" style="left:10px;top:731px;width:1002px;height:1px;background:#a4a19a"></div><div class="a" style="left:10px;top:732px;width:1002px;height:1px;background:#f4f2ee"></div><div class="a" style="left:11px;top:734px;width:44px;height:16px;border-top:1px solid #f0efec;border-left:1px solid #f0efec;border-right:1px solid #a8a59e;border-bottom:1px solid #a8a59e;background:#cac6be"></div><div class="t" style="left:17.5px;top:737.9px;font-size:9.3px;font-weight:normal;color:#333;transform:scaleX(0.902);transform-origin:0 0;">CPlane</div><div class="t" style="left:57.5px;top:737.9px;font-size:9.3px;font-weight:normal;color:#333;transform:scaleX(1.038);transform-origin:0 0;">x 27.7</div><div class="t" style="left:130.0px;top:737.9px;font-size:9.3px;font-weight:normal;color:#333;transform:scaleX(1.046);transform-origin:0 0;">y 81.2</div><div class="t" style="left:202.0px;top:737.9px;font-size:9.3px;font-weight:normal;color:#333;transform:scaleX(1.057);transform-origin:0 0;">z 0.0</div><div class="a" style="left:346px;top:734px;width:141px;height:16px;background:#cdc9c1;border-top:1px solid #808080;border-left:1px solid #808080;border-right:1px solid #fff;border-bottom:1px solid #fff;"></div><div class="a" style="left:349px;top:737px;width:10px;height:10px;background:#000"></div><div class="t" style="left:359.5px;top:737.9px;font-size:9.3px;font-weight:normal;color:#333;transform:scaleX(0.987);transform-origin:0 0;">Layer 02</div><div class="a" style="left:489px;top:734px;width:36px;height:16px;background:#cdc9c1;border-top:1px solid #808080;border-left:1px solid #808080;border-right:1px solid #fff;border-bottom:1px solid #fff;"></div><div class="t" style="left:495.1px;top:737.9px;font-size:9.3px;font-weight:bold;color:#111;transform:scaleX(1.060);transform-origin:0 0;">Snap</div><div class="a" style="left:528px;top:734px;width:38px;height:16px;background:#cdc9c1;border-top:1px solid #808080;border-left:1px solid #808080;border-right:1px solid #fff;border-bottom:1px solid #fff;"></div><div class="t" style="left:534.9px;top:737.9px;font-size:9.3px;font-weight:normal;color:#555;transform:scaleX(1.100);transform-origin:0 0;">Ortho</div><div class="a" style="left:568px;top:734px;width:38px;height:16px;background:#cdc9c1;border-top:1px solid #808080;border-left:1px solid #808080;border-right:1px solid #fff;border-bottom:1px solid #fff;"></div><div class="t" style="left:571.0px;top:737.9px;font-size:9.3px;font-weight:bold;color:#111;transform:scaleX(1.066);transform-origin:0 0;">Planar</div><div class="a" style="left:608px;top:734px;width:37px;height:16px;background:#cdc9c1;border-top:1px solid #808080;border-left:1px solid #808080;border-right:1px solid #fff;border-bottom:1px solid #fff;"></div><div class="t" style="left:610.5px;top:737.9px;font-size:9.3px;font-weight:bold;color:#111;transform:scaleX(1.019);transform-origin:0 0;">Osnap</div><div class="a" style="left:647px;top:734px;width:87px;height:16px;background:#cdc9c1;border-top:1px solid #808080;border-left:1px solid #808080;border-right:1px solid #fff;border-bottom:1px solid #fff;"></div><div class="t" style="left:655.2px;top:737.9px;font-size:9.3px;font-weight:bold;color:#111;transform:scaleX(1.046);transform-origin:0 0;">Record History</div><svg width="1033" height="770"><path d="M1001 750 L1010 741 M1004 750 L1010 744 M1007 750 L1010 747" stroke="#808080" stroke-width="1"/></svg><div class="a" style="left:0;top:752px;width:1033px;height:18px;background:#1b1b1b"></div><div class="a" style="left:0;top:752px;width:1033px;height:6px;background:#262626"></div><div class="a" style="left:0;top:752px;width:511px;height:6px;background:#5a5a5a"></div><div class="a" style="left:0;top:752px;width:426px;height:6px;background:#1e90e0"></div><svg width="1033" height="770"><defs><linearGradient id="gPage" x1="0" y1="0" x2="1" y2="1"><stop offset="0" stop-color="#f4f4f4"/><stop offset="1" stop-color="#c4c4c4"/></linearGradient><linearGradient id="gFold" x1="0" y1="0" x2="0" y2="1"><stop offset="0" stop-color="#f8e08a"/><stop offset="1" stop-color="#e0a820"/></linearGradient><linearGradient id="gBlueS" x1="0" y1="0" x2="1" y2="1"><stop offset="0" stop-color="#9ab0f0"/><stop offset="1" stop-color="#3a58c0"/></linearGradient><radialGradient id="gBall" cx="0.35" cy="0.3" r="0.75"><stop offset="0" stop-color="#9ec0ff"/><stop offset="0.35" stop-color="#2f5fd8"/><stop offset="1" stop-color="#0a1f70"/></radialGradient><radialGradient id="gHelp" cx="0.4" cy="0.3" r="0.8"><stop offset="0" stop-color="#8aa8f0"/><stop offset="0.5" stop-color="#3a60c8"/><stop offset="1" stop-color="#1a3690"/></radialGradient><radialGradient id="gSph" cx="0.4" cy="0.35" r="0.7"><stop offset="0" stop-color="#f8f8f8"/><stop offset="1" stop-color="#a8a8a8"/></radialGradient><radialGradient id="gBulb" cx="0.4" cy="0.35" r="0.7"><stop offset="0" stop-color="#e8e8e8"/><stop offset="1" stop-color="#909090"/></radialGradient><linearGradient id="gRed" x1="0" y1="0" x2="0" y2="1"><stop offset="0" stop-color="#f06060"/><stop offset="1" stop-color="#b01010"/></linearGradient><linearGradient id="gCyl" x1="0" y1="0" x2="1" y2="0"><stop offset="0" stop-color="#4a66c8"/><stop offset="0.5" stop-color="#8ea6f0"/><stop offset="1" stop-color="#4a66c8"/></linearGradient><radialGradient id="gGlow" cx="0.5" cy="0.5" r="0.5"><stop offset="0" stop-color="#f4f2ee"/><stop offset="1" stop-color="#cdc9c1" stop-opacity="0"/></radialGradient><conicGradient id="x"/></defs><defs><linearGradient id="gWheel" x1="0" y1="0" x2="1" y2="1"><stop offset="0" stop-color="#e02020"/><stop offset="0.25" stop-color="#e0c020"/><stop offset="0.5" stop-color="#30c030"/><stop offset="0.75" stop-color="#2090e0"/><stop offset="1" stop-color="#a020c0"/></linearGradient></defs><path d="M19.8 49.1 H28.8 L31.8 52.1 V65.1 H19.8 Z" fill="url(#gPage)" stroke="#2a2a2a" stroke-width="1"/><path d="M28.8 49.1 V52.1 H31.8" fill="none" stroke="#2a2a2a" stroke-width="0.8"/><path d="M41 63.4 L41 52 L43 50.9 L48 50.9 L49.5 52.5 L55 52.5 L55 55 Z" fill="#d8b040" stroke="#5a4810" stroke-width="0.9"/><path d="M41 63.4 L44.5 55.5 L58 55.5 L54.5 63.4 Z" fill="url(#gFold)" stroke="#5a4810" stroke-width="0.9"/><rect x="63.9" y="49.1" width="16.9" height="16" rx="1" fill="#aca66a" stroke="#3a3818" stroke-width="1"/><rect x="66.5" y="49.8" width="11.5" height="6.5" fill="#dcdcdc"/><rect x="67" y="59" width="10.5" height="6" fill="#6e6e64"/><rect x="71" y="60" width="3" height="4" fill="#a8a8a0"/><path d="M89 57 L90 49.5 L100.5 49.5 L99 57 Z" fill="#f4f4f4" stroke="#333" stroke-width="0.9"/><rect x="86.2" y="56.5" width="16.8" height="8.5" rx="2" fill="#8a8a8a" stroke="#2a2a2a" stroke-width="1"/><path d="M87 59.5 H102.5 M87 62 H102.5" stroke="#c8c8c8" stroke-width="1"/><path d="M111.3 50.5 H121 L125.1 54 V62 L122 65.1 H111.3 Z" fill="url(#gPage)" stroke="#2a2a2a" stroke-width="1"/><path d="M116.5 52.5 L120 49 L127.5 49.5 L127.5 52 L121 52.5 Z" fill="#888" stroke="#222" stroke-width="0.8"/><rect x="127" y="48.5" width="1.8" height="4" fill="#000"/><path d="M136.5 50.5 L144.5 62 M145.5 50.5 L137.5 62" stroke="#1a1a1a" stroke-width="1.3"/><ellipse cx="136.8" cy="63" rx="2.2" ry="1.8" fill="none" stroke="#777" stroke-width="1"/><ellipse cx="145.2" cy="63" rx="2.2" ry="1.8" fill="none" stroke="#777" stroke-width="1"/><path d="M159 49.1 H165 L167.4 51.5 V61.8 H159 Z" fill="#eee" stroke="#222" stroke-width="0.9"/><path d="M162.1 53.6 H168.2 L170.6 56 V65.1 H162.1 Z" fill="#e2e2e2" stroke="#222" stroke-width="0.9"/><rect x="181.7" y="49.6" width="12" height="15.1" rx="2" fill="#ebdd8e" stroke="#6a6438" stroke-width="1"/><ellipse cx="187.7" cy="50.5" rx="3.2" ry="1.6" fill="#f4f0d8" stroke="#6a6438" stroke-width="0.8"/><path d="M207 58.5 C209 54 214 52.5 218 55.5" fill="none" stroke="#1a1a1a" stroke-width="2.6"/><path d="M202 60.8 L204.5 54.5 L209.5 59.8 Z" fill="#111"/><path d="M228 65.5 L226 60 L224.8 56 C224.5 54.5 226.5 54 227.2 55.5 L228.5 57.5 L228.5 50.5 C228.5 49 230.5 49 230.6 50.5 L230.8 48.8 C231 47.6 232.8 47.6 233 48.8 L233.2 49.4 C233.5 48.3 235.2 48.3 235.4 49.5 L235.8 50.8 C236.2 49.8 238 50 238 51.5 L239.5 58 L238.5 65.5 Z" fill="#f0f0f0" stroke="#3a3a3a" stroke-width="0.9"/><path d="M230.7 50.5 V57 M233.1 49.3 V57 M235.5 50.5 V57" stroke="#666" stroke-width="0.6"/><ellipse cx="256.3" cy="56.7" rx="8.9" ry="3.8" fill="none" stroke="#555" stroke-width="1"/><ellipse cx="256.3" cy="56.7" rx="3" ry="8.9" fill="none" stroke="#555" stroke-width="1"/><circle cx="258.5" cy="55" r="1.6" fill="#111"/><circle cx="254.3" cy="59.2" r="1.6" fill="#111"/><circle cx="281.3" cy="54.9" r="5.8" fill="#e8e8e8" stroke="#333" stroke-width="1.1"/><path d="M276.8 59.2 L272.6 64.4" stroke="#1a1a1a" stroke-width="1.8"/><path d="M279 53.5 H283.6 M281.3 51.5 V55 M279 57 H283.6" stroke="#222" stroke-width="1"/><rect x="297.6" y="49.1" width="13.3" height="11.6" fill="none" stroke="#222" stroke-width="1" stroke-dasharray="1.5 1.2"/><circle cx="301.6" cy="58.3" r="5.2" fill="#e2e2e2" stroke="#333" stroke-width="1.1"/><path d="M298 62 L294 64.7" stroke="#1a1a1a" stroke-width="1.8"/><path d="M317.6 49.1 H321 L317.6 52.5 Z M334.5 49.1 H331 L334.5 52.5 Z M317.6 65.1 H321 L317.6 61.7 Z M334.5 65.1 H331 L334.5 61.7 Z" fill="#111"/><circle cx="326" cy="55.8" r="5.5" fill="#e2e2e2" stroke="#333" stroke-width="1.1"/><path d="M322 60 L318.5 63.8" stroke="#1a1a1a" stroke-width="1.8"/><circle cx="350.6" cy="55.8" r="6.2" fill="#d8d8d8" stroke="#444" stroke-width="1.3"/><circle cx="351.5" cy="54" r="2" fill="#e8e020"/><circle cx="349.5" cy="57.5" r="2" fill="#d8d010"/><path d="M346.2 60.5 L342.5 64.7" stroke="#1a1a1a" stroke-width="1.8"/><path d="M368 56 C371 52 376 51 380 54" fill="none" stroke="#222" stroke-width="2.2"/><path d="M364 56.5 L367 52 L370 57 Z" fill="#111"/><circle cx="372.4" cy="60.2" r="4.3" fill="#e2e2e2" stroke="#333" stroke-width="1.1"/><path d="M369.3 63 L366.8 65.3" stroke="#1a1a1a" stroke-width="1.6"/><rect x="385.8" y="49.3" width="17.4" height="15.4" fill="#dcdcdc" stroke="#2a2a2a" stroke-width="1.6"/><path d="M394.5 49.3 V64.7 M385.8 57 H403.2" stroke="#2a2a2a" stroke-width="1.3"/><path d="M409.5 59 C409.3 56 411 55.2 413 55 L415 52.8 C417 52 420.5 52 422 53 L424 55.3 C425.7 55.8 426.3 57 426 59.5 Z" fill="url(#gRed)" stroke="#901010" stroke-width="0.6"/><circle cx="413" cy="59.7" r="1.5" fill="#333"/><circle cx="422.5" cy="59.7" r="1.5" fill="#333"/><path d="M437.7 53.0L450.0 56.2M437.7 53.0L431.8 61.4M436.2 55.1L448.6 58.5M440.8 53.8L434.9 62.4M434.8 57.2L447.1 60.8M443.9 54.6L438.0 63.3M433.3 59.3L445.6 63.0M446.9 55.4L441.1 64.3M431.8 61.4L444.2 65.3M450.0 56.2L444.2 65.3" stroke="#8c8c8c" stroke-width="0.75" fill="none"/><path d="M440.9 59.0L443.9 54.6" stroke="#40a040" stroke-width="1"/><path d="M440.9 59.0L447.1 60.8" stroke="#d84040" stroke-width="1"/><rect x="439" y="57" width="3" height="3" fill="none" stroke="#111" stroke-width="1"/><circle cx="463.5" cy="57.1" r="7.2" fill="none" stroke="#777" stroke-width="1"/><rect x="461.8" y="55.6" width="3" height="3" fill="none" stroke="#222" stroke-width="0.9"/><path d="M465 57.1 H474" stroke="#222" stroke-width="1"/><circle cx="484.2" cy="54" r="2.8" fill="#f0d020" stroke="#b09010" stroke-width="0.6"/><rect x="488.2" y="53.6" width="4.9" height="4.9" fill="#f0d020" stroke="#b09010" stroke-width="0.6"/><path d="M485.6 58.9 L487.8 63.4 H483.4 Z" fill="none" stroke="#a89060" stroke-width="0.9"/><path d="M491.5 48.7 H495 V52 M478.5 60.5 V64 H482" fill="none" stroke="#111" stroke-width="1"/><path d="M510.1 48.8 C514 48.8 516 51.5 516 54.5 C516 57 514 58.5 513 60.5 L512.5 64.7 H507.7 L507.2 60.5 C506.2 58.5 504.2 57 504.2 54.5 C504.2 51.5 506.2 48.8 510.1 48.8 Z" fill="url(#gBulb)" stroke="#333" stroke-width="1"/><path d="M530 56 V53 C530 50.5 531.5 49.8 533 49.8 C534.5 49.8 536.3 50.5 536.3 53 V56" fill="none" stroke="#222" stroke-width="1.4"/><rect x="528" y="55.5" width="10.5" height="8.3" rx="1" fill="#c8c8c8" stroke="#2a2a2a" stroke-width="1"/><path d="M530 58.5 H536.5 M530 60.8 H536.5" stroke="#888" stroke-width="0.7"/><path d="M549 50 L562 52.5 L563.5 59 L553.5 65 L549.5 60 Z" fill="#2040a0"/><path d="M549 50 L562 52.5 L563 57 L553.5 62.5 L549.3 57.5 Z" fill="#f4f4f4"/><path d="M549 50 L562 52.5 L562.8 55.5 L553.5 60 L549.2 55 Z" fill="#f05a10"/><path d="M549 50 L562 52.5" stroke="#7a2000" stroke-width="1"/><circle cx="578.9" cy="56.7" r="6.1" fill="none" stroke="url(#gWheel)" stroke-width="3.6"/><circle cx="602.5" cy="57.1" r="7.2" fill="url(#gSph)" stroke="#333" stroke-width="1.1"/><path d="M595.5 58.5 C599 59.8 606 59.8 609.5 58.5 M600.5 50.2 C599 54 599 61 600.5 64" fill="none" stroke="#333" stroke-width="0.9"/><path d="M617 49.5 H634 M617 53.5 H634 M617 57.5 H634 M617 61.5 H634 M617 65 H634 M618 48.5 V66 M622 48.5 V66 M626 48.5 V66 M630 48.5 V66 M634 48.5 V66" stroke="#888" stroke-width="0.6" stroke-dasharray="1 1"/><circle cx="625.2" cy="56.7" r="6.8" fill="url(#gSph)" stroke="#333" stroke-width="1.1"/><path d="M618.5 58 C622 59.3 628.5 59.3 632 58 M623.5 50.2 C622 54 622 60 623.5 63.5" fill="none" stroke="#333" stroke-width="0.9"/><circle cx="648.4" cy="56.7" r="7.3" fill="url(#gBall)"/><ellipse cx="667" cy="58" rx="7" ry="6" fill="url(#gGlow)"/><path d="M669.8 51.5 L680.7 48.4 L678.5 58.5 Z" fill="#f09a20" stroke="#8a4a00" stroke-width="0.8"/><path d="M702.6 57.1 L702.4 58.7 L700.0 59.5 L699.5 60.5 L700.2 63.0 L698.9 64.0 L696.7 62.8 L695.5 63.2 L694.3 65.4 L692.7 65.2 L691.9 62.8 L690.9 62.3 L688.4 63.0 L687.4 61.7 L688.6 59.5 L688.2 58.3 L686.0 57.1 L686.2 55.5 L688.6 54.7 L689.1 53.7 L688.4 51.2 L689.7 50.2 L691.9 51.4 L693.1 51.0 L694.3 48.8 L695.9 49.0 L696.7 51.4 L697.7 51.9 L700.2 51.2 L701.2 52.5 L700.0 54.7 L700.4 55.9Z" fill="#e6d88a" stroke="#5a5020" stroke-width="0.9" stroke-linejoin="round"/><rect x="692.8" y="53.5" width="3" height="7" rx="1" fill="#999"/><path d="M709 49.8 H715 M710.5 51.5 V56.5 M709 58.5 H715 M716.6 59.5 V65.8 M717.5 63.3 H724 M724.8 59 V65" fill="none" stroke="#111" stroke-width="1"/><circle cx="716.6" cy="49.8" r="1.3" fill="#eee" stroke="#111" stroke-width="0.8"/><circle cx="716.6" cy="58.3" r="1.3" fill="#eee" stroke="#111" stroke-width="0.8"/><circle cx="724.8" cy="57.6" r="1.3" fill="#eee" stroke="#111" stroke-width="0.8"/><circle cx="740.8" cy="57.1" r="8.1" fill="url(#gHelp)"/><text x="740.8" y="61.8" font-family="Liberation Sans" font-weight="bold" font-size="13" fill="#fff" text-anchor="middle">?</text><path d="M81.72 66.5 L78.22 66.5 L81.72 63.0 Z" fill="#e9e7e2"/><path d="M104.78 66.5 L101.28 66.5 L104.78 63.0 Z" fill="#e9e7e2"/><path d="M127.84 66.5 L124.34 66.5 L127.84 63.0 Z" fill="#e9e7e2"/><path d="M220.07999999999998 66.5 L216.57999999999998 66.5 L220.07999999999998 63.0 Z" fill="#e9e7e2"/><path d="M381.5 66.5 L378.0 66.5 L381.5 63.0 Z" fill="#e9e7e2"/><path d="M404.56 66.5 L401.06 66.5 L404.56 63.0 Z" fill="#e9e7e2"/><path d="M427.62 66.5 L424.12 66.5 L427.62 63.0 Z" fill="#e9e7e2"/><path d="M450.68 66.5 L447.18 66.5 L450.68 63.0 Z" fill="#e9e7e2"/><path d="M473.74 66.5 L470.24 66.5 L473.74 63.0 Z" fill="#e9e7e2"/><path d="M496.8 66.5 L493.3 66.5 L496.8 63.0 Z" fill="#e9e7e2"/><path d="M519.86 66.5 L516.36 66.5 L519.86 63.0 Z" fill="#e9e7e2"/><path d="M542.92 66.5 L539.42 66.5 L542.92 63.0 Z" fill="#e9e7e2"/><path d="M565.98 66.5 L562.48 66.5 L565.98 63.0 Z" fill="#e9e7e2"/><path d="M589.04 66.5 L585.54 66.5 L589.04 63.0 Z" fill="#e9e7e2"/><path d="M612.1 66.5 L608.6 66.5 L612.1 63.0 Z" fill="#e9e7e2"/><path d="M635.16 66.5 L631.66 66.5 L635.16 63.0 Z" fill="#e9e7e2"/><path d="M658.22 66.5 L654.72 66.5 L658.22 63.0 Z" fill="#e9e7e2"/><path d="M681.28 66.5 L677.78 66.5 L681.28 63.0 Z" fill="#e9e7e2"/><path d="M704.34 66.5 L700.84 66.5 L704.34 63.0 Z" fill="#e9e7e2"/><path d="M727.4 66.5 L723.9 66.5 L727.4 63.0 Z" fill="#e9e7e2"/><path d="M750.46 66.5 L746.96 66.5 L750.46 63.0 Z" fill="#e9e7e2"/><path d="M17.1 104.3 V115.4 L19.8 113 L21.8 117 L23.5 116.2 L21.5 112.3 L24.9 112.1 Z" fill="#f4f4f4" stroke="#2a2a2a" stroke-width="0.9"/><circle cx="44.4" cy="110.2" r="2" fill="none" stroke="#3a3a3a" stroke-width="1.25"/><path d="M15.1 139.4 L19.7 128.4 L26.8 136.8" fill="none" stroke="#3a3a3a" stroke-width="1.25"/><rect x="13.6" y="137.9" width="3" height="3" fill="#e4e4e4" stroke="#333" stroke-width="1"/><rect x="18.2" y="126.9" width="3" height="3" fill="#e4e4e4" stroke="#333" stroke-width="1"/><rect x="25.3" y="135.3" width="3" height="3" fill="#e4e4e4" stroke="#333" stroke-width="1"/><path d="M37.9 128.4 C44 127 52 126 52 134 C52 140 44 139 37.9 138.1" fill="none" stroke="#3a3a3a" stroke-width="1.25"/><rect x="36.4" y="126.9" width="3" height="3" fill="#e4e4e4" stroke="#333" stroke-width="1"/><rect x="48.1" y="124.9" width="3" height="3" fill="#e4e4e4" stroke="#333" stroke-width="1"/><rect x="50.7" y="139.2" width="3" height="3" fill="#e4e4e4" stroke="#333" stroke-width="1"/><rect x="36.4" y="136.6" width="3" height="3" fill="#e4e4e4" stroke="#333" stroke-width="1"/><circle cx="21" cy="155.9" r="7.6" fill="none" stroke="#3a3a3a" stroke-width="1.25"/><rect x="19.5" y="154.4" width="3" height="3" fill="#e4e4e4" stroke="#333" stroke-width="1"/><rect x="24.7" y="149.3" width="3" height="3" fill="#e4e4e4" stroke="#333" stroke-width="1"/><ellipse cx="45" cy="156.3" rx="8.4" ry="5.6" fill="none" stroke="#3a3a3a" stroke-width="1.25"/><rect x="43.5" y="154.8" width="3" height="3" fill="#e4e4e4" stroke="#333" stroke-width="1"/><rect x="43.5" y="149.2" width="3" height="3" fill="#e4e4e4" stroke="#333" stroke-width="1"/><rect x="51.5" y="154.8" width="3" height="3" fill="#e4e4e4" stroke="#333" stroke-width="1"/><path d="M16.4 173.2 C22 173.5 26 177 27.5 180.3 M16.4 173.2 V186.2 L27.5 180.3" fill="none" stroke="#3a3a3a" stroke-width="1.25"/><rect x="14.9" y="171.7" width="3" height="3" fill="#e4e4e4" stroke="#333" stroke-width="1"/><rect x="26.0" y="178.8" width="3" height="3" fill="#e4e4e4" stroke="#333" stroke-width="1"/><rect x="14.9" y="184.7" width="3" height="3" fill="#e4e4e4" stroke="#333" stroke-width="1"/><rect x="38.1" y="175.1" width="14.1" height="9.1" fill="none" stroke="#3a3a3a" stroke-width="1.3"/><rect x="50.7" y="173.6" width="3" height="3" fill="#e4e4e4" stroke="#333" stroke-width="1"/><rect x="36.6" y="182.7" width="3" height="3" fill="#e4e4e4" stroke="#333" stroke-width="1"/><path d="M14 202.3 L17.5 196.2 H24.5 L28 202.3 L24.5 208.4 H17.5 Z" fill="none" stroke="#3a3a3a" stroke-width="1.2"/><rect x="19.5" y="200.8" width="3" height="3" fill="#e4e4e4" stroke="#333" stroke-width="1"/><circle cx="27.5" cy="202.3" r="1.5" fill="none" stroke="#333" stroke-width="0.8"/><path d="M38.5 197 H45 C49 197 51.5 201 51.5 210" fill="none" stroke="#222" stroke-width="1.5"/><circle cx="38.5" cy="197" r="1.6" fill="#ddd" stroke="#222" stroke-width="0.8"/><circle cx="51.5" cy="210" r="1.6" fill="#ddd" stroke="#222" stroke-width="0.8"/><path d="M17.7 219.2 L27.5 219.2 L23.6 232.8 L14.5 228.3 Z" fill="#5a78d8" stroke="#2a3a80" stroke-width="0.8"/><path d="M22.6 219.2 L19 230.5 M16 223.8 L25.5 226" stroke="#a8bcf0" stroke-width="0.8"/><rect x="16.2" y="217.7" width="3" height="3" fill="#e4e4e4" stroke="#333" stroke-width="1"/><rect x="26.0" y="217.7" width="3" height="3" fill="#e4e4e4" stroke="#333" stroke-width="1"/><rect x="13.0" y="226.8" width="3" height="3" fill="#e4e4e4" stroke="#333" stroke-width="1"/><rect x="22.1" y="231.3" width="3" height="3" fill="#e4e4e4" stroke="#333" stroke-width="1"/><path d="M38 221.5 C42 218 48 217.5 52.5 221 L52.8 229 L46.5 233.5 C46 228 43 224 38 221.5 Z" fill="url(#gBlueS)" stroke="#2a3a80" stroke-width="0.8"/><path d="M40 220.5 L46 219.5 L48 226" stroke="#f0f4ff" stroke-width="1.4" fill="none"/><path d="M14.5 245 L21.5 241.5 L28 244.5 V253 L21.5 257 L14.5 253.5 Z" fill="#4f6fd8" stroke="#1a2a70" stroke-width="0.9"/><path d="M14.5 245 L21.5 248.5 L28 244.5 M21.5 248.5 V257" stroke="#1a2a70" stroke-width="0.7" fill="none"/><path d="M15 245 L21.5 241.8 L27.5 244.5 L21.5 248 Z" fill="#9ab0f0"/><circle cx="41.1" cy="251.6" r="5.6" fill="url(#gBlueS)" stroke="#1a2a70" stroke-width="0.8"/><circle cx="48.3" cy="245.1" r="5.6" fill="url(#gBlueS)" stroke="#1a2a70" stroke-width="0.8"/><ellipse cx="21" cy="265.6" rx="4.5" ry="2.2" fill="none" stroke="#3a3a3a" stroke-width="1.25"/><path d="M12.5 271 C17 269 25 269 29.4 271 V280 C25 282.5 17 282.5 12.5 280 Z" fill="url(#gCyl)" stroke="#2a3a80" stroke-width="0.8"/><ellipse cx="21" cy="276" rx="5" ry="2.2" fill="#f0f4ff"/><path d="M38.5 266 L52 264.6 L54 270 L50 280.2 L36 278.5 L39.5 272 Z" fill="#5a78d8" stroke="#2a3a80" stroke-width="0.8"/><path d="M45 266 L43 279 M38 272 L52 274" stroke="#a8bcf0" stroke-width="0.8"/><path d="M13.5 291 L16 288 L18 289.5 L20 287.3 L23.5 289.5 L22.5 293 L20 295 L17.5 297.5 L15 294.5 Z" fill="#f0a820" stroke="#8a5a00" stroke-width="0.6"/><path d="M20 295 L22.5 292.5 L25 294 L27.5 293.5 L29.5 297 L28 300.5 L25.5 303.3 L22 302 L20 299 Z" fill="#f8f8f8" stroke="#555" stroke-width="0.7"/><path d="M34.6 306 L37 291 L40.5 299 L45.5 289 L45 298 L52 292 L47 301 L52.8 300 L45 306 Z" fill="#f0a810" stroke="#6a4a00" stroke-width="0.6"/><path d="M20.3 310 H25.5 L23 320.3 Z" fill="#2a40b0"/><rect x="12.5" y="317" width="9.5" height="4" fill="#f4f4f4" stroke="#333" stroke-width="0.8"/><path d="M23 318.5 L28.5 323.5 L26 326.5 L20.5 321.5 Z" fill="#f4f4f4" stroke="#333" stroke-width="0.8"/><path d="M44 310 H49 L46.5 320 Z" fill="#2a40b0"/><rect x="36.6" y="317.7" width="16.2" height="4.6" fill="#f4f4f4" stroke="#333" stroke-width="0.8"/><path d="M46.5 317.7 V322.3" stroke="#2a40b0" stroke-width="1.2"/><circle cx="21" cy="338.5" r="3.9" fill="#9aa0e8" stroke="#111" stroke-width="0.9"/><circle cx="18.4" cy="343" r="3.9" fill="#f4f4f4" stroke="#111" stroke-width="0.9"/><circle cx="24.2" cy="343" r="3.9" fill="#2a2a90" stroke="#111" stroke-width="0.9"/><circle cx="45" cy="337.2" r="3" fill="#9aa0e8"/><circle cx="40.5" cy="344.3" r="3" fill="#f4f4f4" stroke="#777" stroke-width="0.8"/><circle cx="49.6" cy="344.3" r="3" fill="#2a2a90"/><path d="M13.2 360.5 C18 357 23 362 24.9 370" fill="none" stroke="#111" stroke-width="1.3"/><circle cx="16.5" cy="359.5" r="1.3" fill="#eee" stroke="#222" stroke-width="0.6"/><circle cx="25" cy="368.5" r="1.3" fill="#eee" stroke="#222" stroke-width="0.6"/><path d="M36.5 360.5 C43 357 50 362 50.5 372" fill="none" stroke="#111" stroke-width="1.3"/><circle cx="42" cy="356.5" r="1.5" fill="#ddd" stroke="#222" stroke-width="0.6"/><circle cx="51" cy="367" r="1.5" fill="#ddd" stroke="#222" stroke-width="0.6"/><path d="M36 357 H42" stroke="#222" stroke-width="0.7"/><path d="M14 378.5 L28 380.5 L27.3 384.5 L23.5 384.3 L22.5 394.5 L18.5 396 L18.8 383.8 L14.5 383.3 Z" fill="#5a78d8" stroke="#1a2a70" stroke-width="0.9"/><rect x="37.2" y="389.5" width="5.8" height="5.2" fill="#f4f4f4" stroke="#333" stroke-width="0.8"/><rect x="47.6" y="379.1" width="5.9" height="5.9" fill="#5a78d8" stroke="#1a2a70" stroke-width="0.8"/><path d="M42.5 389.5 L47 385" stroke="#222" stroke-width="0.9"/><rect x="14.5" y="402.5" width="4.5" height="4.5" fill="#5a78d8" stroke="#1a2a70" stroke-width="0.6"/><rect x="21" y="407.7" width="4.5" height="4.5" fill="#5a78d8" stroke="#1a2a70" stroke-width="0.6"/><rect x="24.2" y="404.5" width="4.5" height="4.5" fill="#5a78d8" stroke="#1a2a70" stroke-width="0.6"/><rect x="24.2" y="413.5" width="4.5" height="4.5" fill="#5a78d8" stroke="#1a2a70" stroke-width="0.6"/><rect x="14.5" y="412.3" width="4.5" height="4.5" fill="#f4f4f4" stroke="#333" stroke-width="0.6"/><rect x="35.9" y="403.2" width="4.6" height="11.7" fill="#f4f4f4" stroke="#333" stroke-width="0.8"/><path d="M43 415.5 L52 406 L54 408.5 L45 418 Z" fill="#5a78d8" stroke="#1a2a70" stroke-width="0.8"/><path d="M40.5 404 L46 406.5" stroke="#222" stroke-width="0.8"/><path d="M13.2 428 L20.5 424.6 L28.8 427.5 V438 L21 442.1 L13.2 438.5 Z" fill="#4f6fd8" stroke="#1a2a70" stroke-width="0.9"/><path d="M13.5 428 L20.5 425 L28.5 427.5 L21 431 Z" fill="#a8bcf0"/><rect x="20" y="435" width="5" height="5" fill="#f4f4f4"/><path d="M38 436.3 H53.5 L51.5 440.8 H35.9 Z" fill="#5a78d8" stroke="#1a2a70" stroke-width="0.7"/><path d="M40 435 V428 M44.5 435 V428 M49 435 V428" stroke="#f4f4f4" stroke-width="1.3"/><path d="M38.5 429.5 L40 427.5 L41.5 429.5 M43 429.5 L44.5 427.5 L46 429.5 M47.5 429.5 L49 427.5 L50.5 429.5" stroke="#f4f4f4" stroke-width="0.9" fill="none"/><path d="M32.0 120.3 L28.5 120.3 L32.0 116.8 Z" fill="#e9e7e2"/><path d="M55.8 120.3 L52.3 120.3 L55.8 116.8 Z" fill="#e9e7e2"/><path d="M32.0 143.38 L28.5 143.38 L32.0 139.88 Z" fill="#e9e7e2"/><path d="M55.8 143.38 L52.3 143.38 L55.8 139.88 Z" fill="#e9e7e2"/><path d="M32.0 166.45999999999998 L28.5 166.45999999999998 L32.0 162.95999999999998 Z" fill="#e9e7e2"/><path d="M55.8 166.45999999999998 L52.3 166.45999999999998 L55.8 162.95999999999998 Z" fill="#e9e7e2"/><path d="M32.0 189.54 L28.5 189.54 L32.0 186.04 Z" fill="#e9e7e2"/><path d="M55.8 189.54 L52.3 189.54 L55.8 186.04 Z" fill="#e9e7e2"/><path d="M32.0 212.62 L28.5 212.62 L32.0 209.12 Z" fill="#e9e7e2"/><path d="M55.8 212.62 L52.3 212.62 L55.8 209.12 Z" fill="#e9e7e2"/><path d="M32.0 235.7 L28.5 235.7 L32.0 232.2 Z" fill="#e9e7e2"/><path d="M55.8 235.7 L52.3 235.7 L55.8 232.2 Z" fill="#e9e7e2"/><path d="M32.0 258.78 L28.5 258.78 L32.0 255.27999999999997 Z" fill="#e9e7e2"/><path d="M55.8 258.78 L52.3 258.78 L55.8 255.27999999999997 Z" fill="#e9e7e2"/><path d="M32.0 281.86 L28.5 281.86 L32.0 278.36 Z" fill="#e9e7e2"/><path d="M55.8 281.86 L52.3 281.86 L55.8 278.36 Z" fill="#e9e7e2"/><path d="M32.0 304.94 L28.5 304.94 L32.0 301.44 Z" fill="#e9e7e2"/><path d="M55.8 304.94 L52.3 304.94 L55.8 301.44 Z" fill="#e9e7e2"/><path d="M32.0 328.02 L28.5 328.02 L32.0 324.52 Z" fill="#e9e7e2"/><path d="M55.8 328.02 L52.3 328.02 L55.8 324.52 Z" fill="#e9e7e2"/><path d="M32.0 351.09999999999997 L28.5 351.09999999999997 L32.0 347.59999999999997 Z" fill="#e9e7e2"/><path d="M55.8 351.09999999999997 L52.3 351.09999999999997 L55.8 347.59999999999997 Z" fill="#e9e7e2"/><path d="M32.0 374.18 L28.5 374.18 L32.0 370.68 Z" fill="#e9e7e2"/><path d="M55.8 374.18 L52.3 374.18 L55.8 370.68 Z" fill="#e9e7e2"/><path d="M32.0 397.26 L28.5 397.26 L32.0 393.76 Z" fill="#e9e7e2"/><path d="M55.8 397.26 L52.3 397.26 L55.8 393.76 Z" fill="#e9e7e2"/><path d="M32.0 420.34 L28.5 420.34 L32.0 416.84 Z" fill="#e9e7e2"/><path d="M55.8 420.34 L52.3 420.34 L55.8 416.84 Z" fill="#e9e7e2"/><path d="M32.0 443.42 L28.5 443.42 L32.0 439.92 Z" fill="#e9e7e2"/><path d="M55.8 443.42 L52.3 443.42 L55.8 439.92 Z" fill="#e9e7e2"/><path d="M998.2 107.4L1012.4 111.1M998.2 107.4L991.4 117.1M996.5 109.8L1010.7 113.7M1001.7 108.3L995.0 118.2M994.8 112.2L1009.0 116.3M1005.3 109.2L998.5 119.3M993.1 114.6L1007.3 118.9M1008.8 110.2L1002.1 120.4M991.4 117.1L1005.7 121.5M1012.4 111.1L1005.7 121.5" stroke="#8c8c8c" stroke-width="0.75" fill="none"/><path d="M1001.9 114.3L1005.3 109.2" stroke="#40a040" stroke-width="1"/><path d="M1001.9 114.3L1009.0 116.3" stroke="#d84040" stroke-width="1"/><path d="M998.2 130.2L1012.4 133.9M998.2 130.2L991.4 139.9M996.5 132.6L1010.7 136.5M1001.7 131.1L995.0 141.0M994.8 135.0L1009.0 139.1M1005.3 132.0L998.5 142.1M993.1 137.4L1007.3 141.7M1008.8 133.0L1002.1 143.2M991.4 139.9L1005.7 144.3M1012.4 133.9L1005.7 144.3" stroke="#8c8c8c" stroke-width="0.75" fill="none"/><path d="M1001.9 137.1L1005.3 132.0" stroke="#40a040" stroke-width="1"/><path d="M1001.9 137.1L1009.0 139.1" stroke="#d84040" stroke-width="1"/><path d="M998.2 153.0L1012.4 156.7M998.2 153.0L991.4 162.7M996.5 155.4L1010.7 159.3M1001.7 153.9L995.0 163.8M994.8 157.8L1009.0 161.9M1005.3 154.8L998.5 164.9M993.1 160.2L1007.3 164.5M1008.8 155.8L1002.1 166.0M991.4 162.7L1005.7 167.1M1012.4 156.7L1005.7 167.1" stroke="#8c8c8c" stroke-width="0.75" fill="none"/><path d="M1001.9 159.9L1005.3 154.8" stroke="#40a040" stroke-width="1"/><path d="M1001.9 159.9L1009.0 161.9" stroke="#d84040" stroke-width="1"/><path d="M998.2 175.8L1012.4 179.5M998.2 175.8L991.4 185.5M996.5 178.2L1010.7 182.1M1001.7 176.7L995.0 186.6M994.8 180.6L1009.0 184.7M1005.3 177.6L998.5 187.7M993.1 183.0L1007.3 187.3M1008.8 178.6L1002.1 188.8M991.4 185.5L1005.7 189.9M1012.4 179.5L1005.7 189.9" stroke="#8c8c8c" stroke-width="0.75" fill="none"/><path d="M1001.9 182.7L1005.3 177.6" stroke="#40a040" stroke-width="1"/><path d="M1001.9 182.7L1009.0 184.7" stroke="#d84040" stroke-width="1"/><path d="M998.2 198.6L1012.4 202.3M998.2 198.6L991.4 208.3M996.5 201.0L1010.7 204.9M1001.7 199.5L995.0 209.4M994.8 203.4L1009.0 207.5M1005.3 200.4L998.5 210.5M993.1 205.8L1007.3 210.1M1008.8 201.4L1002.1 211.6M991.4 208.3L1005.7 212.7M1012.4 202.3L1005.7 212.7" stroke="#8c8c8c" stroke-width="0.75" fill="none"/><path d="M1001.9 205.5L1005.3 200.4" stroke="#40a040" stroke-width="1"/><path d="M1001.9 205.5L1009.0 207.5" stroke="#d84040" stroke-width="1"/><path d="M998.2 221.4L1012.4 225.1M998.2 221.4L991.4 231.1M996.5 223.8L1010.7 227.7M1001.7 222.3L995.0 232.2M994.8 226.2L1009.0 230.3M1005.3 223.2L998.5 233.3M993.1 228.6L1007.3 232.9M1008.8 224.2L1002.1 234.4M991.4 231.1L1005.7 235.5M1012.4 225.1L1005.7 235.5" stroke="#8c8c8c" stroke-width="0.75" fill="none"/><path d="M1001.9 228.3L1005.3 223.2" stroke="#40a040" stroke-width="1"/><path d="M1001.9 228.3L1009.0 230.3" stroke="#d84040" stroke-width="1"/><path d="M998.2 244.2L1012.4 247.9M998.2 244.2L991.4 253.9M996.5 246.6L1010.7 250.5M1001.7 245.1L995.0 255.0M994.8 249.0L1009.0 253.1M1005.3 246.0L998.5 256.1M993.1 251.4L1007.3 255.7M1008.8 247.0L1002.1 257.2M991.4 253.9L1005.7 258.3M1012.4 247.9L1005.7 258.3" stroke="#8c8c8c" stroke-width="0.75" fill="none"/><path d="M1001.9 251.1L1005.3 246.0" stroke="#40a040" stroke-width="1"/><path d="M1001.9 251.1L1009.0 253.1" stroke="#d84040" stroke-width="1"/><path d="M998.2 267.0L1012.4 270.7M998.2 267.0L991.4 276.7M996.5 269.4L1010.7 273.3M1001.7 267.9L995.0 277.8M994.8 271.8L1009.0 275.9M1005.3 268.8L998.5 278.9M993.1 274.2L1007.3 278.5M1008.8 269.8L1002.1 280.0M991.4 276.7L1005.7 281.1M1012.4 270.7L1005.7 281.1" stroke="#8c8c8c" stroke-width="0.75" fill="none"/><path d="M1001.9 273.9L1005.3 268.8" stroke="#40a040" stroke-width="1"/><path d="M1001.9 273.9L1009.0 275.9" stroke="#d84040" stroke-width="1"/><path d="M998.2 289.8L1012.4 293.5M998.2 289.8L991.4 299.5M996.5 292.2L1010.7 296.1M1001.7 290.7L995.0 300.6M994.8 294.6L1009.0 298.7M1005.3 291.6L998.5 301.7M993.1 297.0L1007.3 301.3M1008.8 292.6L1002.1 302.8M991.4 299.5L1005.7 303.9M1012.4 293.5L1005.7 303.9" stroke="#8c8c8c" stroke-width="0.75" fill="none"/><path d="M1001.9 296.7L1005.3 291.6" stroke="#40a040" stroke-width="1"/><path d="M1001.9 296.7L1009.0 298.7" stroke="#d84040" stroke-width="1"/><path d="M998.2 312.6L1012.4 316.3M998.2 312.6L991.4 322.3M996.5 315.0L1010.7 318.9M1001.7 313.5L995.0 323.4M994.8 317.4L1009.0 321.5M1005.3 314.4L998.5 324.5M993.1 319.8L1007.3 324.1M1008.8 315.4L1002.1 325.6M991.4 322.3L1005.7 326.7M1012.4 316.3L1005.7 326.7" stroke="#8c8c8c" stroke-width="0.75" fill="none"/><path d="M1001.9 319.5L1005.3 314.4" stroke="#40a040" stroke-width="1"/><path d="M1001.9 319.5L1009.0 321.5" stroke="#d84040" stroke-width="1"/><path d="M998.2 335.4L1012.4 339.1M998.2 335.4L991.4 345.1M996.5 337.8L1010.7 341.7M1001.7 336.3L995.0 346.2M994.8 340.2L1009.0 344.3M1005.3 337.2L998.5 347.3M993.1 342.6L1007.3 346.9M1008.8 338.2L1002.1 348.4M991.4 345.1L1005.7 349.5M1012.4 339.1L1005.7 349.5" stroke="#8c8c8c" stroke-width="0.75" fill="none"/><path d="M1001.9 342.3L1005.3 337.2" stroke="#40a040" stroke-width="1"/><path d="M1001.9 342.3L1009.0 344.3" stroke="#d84040" stroke-width="1"/><path d="M998.2 358.2L1012.4 361.9M998.2 358.2L991.4 367.9M996.5 360.6L1010.7 364.5M1001.7 359.1L995.0 369.0M994.8 363.0L1009.0 367.1M1005.3 360.0L998.5 370.1M993.1 365.4L1007.3 369.7M1008.8 361.0L1002.1 371.2M991.4 367.9L1005.7 372.3M1012.4 361.9L1005.7 372.3" stroke="#8c8c8c" stroke-width="0.75" fill="none"/><path d="M1001.9 365.1L1005.3 360.0" stroke="#40a040" stroke-width="1"/><path d="M1001.9 365.1L1009.0 367.1" stroke="#d84040" stroke-width="1"/><path d="M998.2 381.0L1012.4 384.7M998.2 381.0L991.4 390.7M996.5 383.4L1010.7 387.3M1001.7 381.9L995.0 391.8M994.8 385.8L1009.0 389.9M1005.3 382.8L998.5 392.9M993.1 388.2L1007.3 392.5M1008.8 383.8L1002.1 394.0M991.4 390.7L1005.7 395.1M1012.4 384.7L1005.7 395.1" stroke="#8c8c8c" stroke-width="0.75" fill="none"/><path d="M1001.9 387.9L1005.3 382.8" stroke="#40a040" stroke-width="1"/><path d="M1001.9 387.9L1009.0 389.9" stroke="#d84040" stroke-width="1"/><path d="M998.2 403.8L1012.4 407.5M998.2 403.8L991.4 413.5M996.5 406.2L1010.7 410.1M1001.7 404.7L995.0 414.6M994.8 408.6L1009.0 412.7M1005.3 405.6L998.5 415.7M993.1 411.0L1007.3 415.3M1008.8 406.6L1002.1 416.8M991.4 413.5L1005.7 417.9M1012.4 407.5L1005.7 417.9" stroke="#8c8c8c" stroke-width="0.75" fill="none"/><path d="M1001.9 410.7L1005.3 405.6" stroke="#40a040" stroke-width="1"/><path d="M1001.9 410.7L1009.0 412.7" stroke="#d84040" stroke-width="1"/><path d="M998.2 426.6L1012.4 430.3M998.2 426.6L991.4 436.3M996.5 429.0L1010.7 432.9M1001.7 427.5L995.0 437.4M994.8 431.4L1009.0 435.5M1005.3 428.4L998.5 438.5M993.1 433.8L1007.3 438.1M1008.8 429.4L1002.1 439.6M991.4 436.3L1005.7 440.7M1012.4 430.3L1005.7 440.7" stroke="#8c8c8c" stroke-width="0.75" fill="none"/><path d="M1001.9 433.5L1005.3 428.4" stroke="#40a040" stroke-width="1"/><path d="M1001.9 433.5L1009.0 435.5" stroke="#d84040" stroke-width="1"/><path d="M998.2 449.4L1012.4 453.1M998.2 449.4L991.4 459.1M996.5 451.8L1010.7 455.7M1001.7 450.3L995.0 460.2M994.8 454.2L1009.0 458.3M1005.3 451.2L998.5 461.3M993.1 456.6L1007.3 460.9M1008.8 452.2L1002.1 462.4M991.4 459.1L1005.7 463.5M1012.4 453.1L1005.7 463.5" stroke="#8c8c8c" stroke-width="0.75" fill="none"/><path d="M1001.9 456.3L1005.3 451.2" stroke="#40a040" stroke-width="1"/><path d="M1001.9 456.3L1009.0 458.3" stroke="#d84040" stroke-width="1"/><path d="M998.2 472.2L1012.4 475.9M998.2 472.2L991.4 481.9M996.5 474.6L1010.7 478.5M1001.7 473.1L995.0 483.0M994.8 477.0L1009.0 481.1M1005.3 474.0L998.5 484.1M993.1 479.4L1007.3 483.7M1008.8 475.0L1002.1 485.2M991.4 481.9L1005.7 486.3M1012.4 475.9L1005.7 486.3" stroke="#8c8c8c" stroke-width="0.75" fill="none"/><path d="M1001.9 479.1L1005.3 474.0" stroke="#40a040" stroke-width="1"/><path d="M1001.9 479.1L1009.0 481.1" stroke="#d84040" stroke-width="1"/><path d="M998.2 495.0L1012.4 498.7M998.2 495.0L991.4 504.7M996.5 497.4L1010.7 501.3M1001.7 495.9L995.0 505.8M994.8 499.8L1009.0 503.9M1005.3 496.8L998.5 506.9M993.1 502.2L1007.3 506.5M1008.8 497.8L1002.1 508.0M991.4 504.7L1005.7 509.1M1012.4 498.7L1005.7 509.1" stroke="#8c8c8c" stroke-width="0.75" fill="none"/><path d="M1001.9 501.9L1005.3 496.8" stroke="#40a040" stroke-width="1"/><path d="M1001.9 501.9L1009.0 503.9" stroke="#d84040" stroke-width="1"/><path d="M998.2 517.8L1012.4 521.5M998.2 517.8L991.4 527.5M996.5 520.2L1010.7 524.1M1001.7 518.7L995.0 528.6M994.8 522.6L1009.0 526.7M1005.3 519.6L998.5 529.7M993.1 525.0L1007.3 529.3M1008.8 520.6L1002.1 530.8M991.4 527.5L1005.7 531.9M1012.4 521.5L1005.7 531.9" stroke="#8c8c8c" stroke-width="0.75" fill="none"/><path d="M1001.9 524.7L1005.3 519.6" stroke="#40a040" stroke-width="1"/><path d="M1001.9 524.7L1009.0 526.7" stroke="#d84040" stroke-width="1"/><path d="M998.2 540.6L1012.4 544.3M998.2 540.6L991.4 550.3M996.5 543.0L1010.7 546.9M1001.7 541.5L995.0 551.4M994.8 545.4L1009.0 549.5M1005.3 542.4L998.5 552.5M993.1 547.8L1007.3 552.1M1008.8 543.4L1002.1 553.6M991.4 550.3L1005.7 554.7M1012.4 544.3L1005.7 554.7" stroke="#8c8c8c" stroke-width="0.75" fill="none"/><path d="M1001.9 547.5L1005.3 542.4" stroke="#40a040" stroke-width="1"/><path d="M1001.9 547.5L1009.0 549.5" stroke="#d84040" stroke-width="1"/><path d="M998.2 563.4L1012.4 567.1M998.2 563.4L991.4 573.1M996.5 565.8L1010.7 569.7M1001.7 564.3L995.0 574.2M994.8 568.2L1009.0 572.3M1005.3 565.2L998.5 575.3M993.1 570.6L1007.3 574.9M1008.8 566.2L1002.1 576.4M991.4 573.1L1005.7 577.5M1012.4 567.1L1005.7 577.5" stroke="#8c8c8c" stroke-width="0.75" fill="none"/><path d="M1001.9 570.3L1005.3 565.2" stroke="#40a040" stroke-width="1"/><path d="M1001.9 570.3L1009.0 572.3" stroke="#d84040" stroke-width="1"/><path d="M998.2 586.2L1012.4 589.9M998.2 586.2L991.4 595.9M996.5 588.6L1010.7 592.5M1001.7 587.1L995.0 597.0M994.8 591.0L1009.0 595.1M1005.3 588.0L998.5 598.1M993.1 593.4L1007.3 597.7M1008.8 589.0L1002.1 599.2M991.4 595.9L1005.7 600.3M1012.4 589.9L1005.7 600.3" stroke="#8c8c8c" stroke-width="0.75" fill="none"/><path d="M1001.9 593.1L1005.3 588.0" stroke="#40a040" stroke-width="1"/><path d="M1001.9 593.1L1009.0 595.1" stroke="#d84040" stroke-width="1"/><rect x="999" y="112" width="3" height="3" fill="#fff" stroke="#111" stroke-width="0.8"/><path d="M1000 137 V127 M998 129 L1000 126 L1002 129" stroke="#111" stroke-width="1" fill="none"/><path d="M992.5 155 L997.5 152.5 L1002 154.5 V160.5 L997.5 163.5 L992.5 161 Z" fill="#5a78d8" stroke="#1a2a70" stroke-width="0.8"/><path d="M992.8 155 L997.5 152.8 L1001.8 154.6 L997 157 Z" fill="#a8bcf0"/><circle cx="997.5" cy="182" r="4.5" fill="url(#gBall)"/><path d="M993 209 C997 208 1003 204 1007 197" stroke="#f4f4f4" stroke-width="1.5" fill="none"/><rect x="998" y="203" width="3" height="3" fill="#fff" stroke="#111" stroke-width="0.8"/><path d="M994 234 C993 228 997 223 1003 222" stroke="#111" stroke-width="1" fill="none"/><rect x="993" y="230" width="3" height="3" fill="#fff" stroke="#111" stroke-width="0.8"/><path d="M1003 226 L1007 227 L1004 224 Z" fill="#111"/><path d="M1000.5 238 V249" stroke="#5ab05a" stroke-width="1.5"/><rect x="998" y="271" width="3" height="3" fill="#fff" stroke="#111" stroke-width="0.8"/><rect x="1001" y="264" width="3" height="3" fill="#fff" stroke="#111" stroke-width="0.8"/><circle cx="1007" cy="274" r="1.5" fill="#fff" stroke="#111" stroke-width="0.8"/><rect x="998" y="294" width="3" height="3" fill="#fff" stroke="#111" stroke-width="0.8"/><circle cx="1007" cy="296" r="1.6" fill="#fff" stroke="#111" stroke-width="0.8"/><path d="M1000.5 310 V318" stroke="#111" stroke-width="0.9"/><circle cx="1000.5" cy="311" r="1.5" fill="#fff" stroke="#111" stroke-width="0.8"/><rect x="999" y="318" width="3" height="3" fill="#fff" stroke="#111" stroke-width="0.8"/><path d="M996 340 C999 336 1004 335 1008 338" stroke="#111" stroke-width="2" fill="none"/><path d="M992 340 L996 336 L998 341 Z" fill="#111"/><path d="M993.5 357 V369 L996 366.5 L998 370 L999.5 369 L998 365.5 L1001 365.5 Z" fill="#f4f4f4" stroke="#222" stroke-width="0.8"/><path d="M995 383 L1003 379 L1009 380 V384 L1002 385 Z" fill="#888" stroke="#333" stroke-width="0.7"/><rect x="992" y="401" width="11" height="11" fill="#6e6e60" stroke="#222" stroke-width="0.9"/><rect x="994" y="402" width="7" height="4" fill="#ddd"/><path d="M991.5 442 L993 426 H999 L1001 428 H1006 L1009.5 432 L1005 442 Z" fill="url(#gFold)" stroke="#3a2a00" stroke-width="0.9"/><ellipse cx="1001" cy="449" rx="6" ry="2.8" fill="#eef" stroke="#2a3a90" stroke-width="0.9"/><circle cx="1001" cy="449" r="1.8" fill="#2a50c0"/><path d="M1001 452 V464" stroke="#333" stroke-width="0.8"/><path d="M999 470 H1003 V475 H1005 L1001 479 L997 475 H999 Z" fill="#fff" stroke="#111" stroke-width="0.8"/><path d="M999 511 H1003 V506 H1005 L1001 502 L997 506 H999 Z" fill="#fff" stroke="#111" stroke-width="0.8"/><path d="M993 533 L996 527 L999 530 L995 534 Z" fill="#fff" stroke="#111" stroke-width="0.8"/><path d="M1009 543 L1006 549 L1003 546 L1007 542 Z" fill="#fff" stroke="#111" stroke-width="0.8"/><path d="M1003 572 H1008 L1005 575 Z M1001 569 H1007 V575 H1001 Z" fill="#fff" stroke="#111" stroke-width="0.8"/><path d="M992 595 H997 V592 L1001 596 L997 600 V597 H992 Z" fill="#fff" stroke="#111" stroke-width="0.8"/><rect x="971.7" y="371.5" width="9.2" height="13.5" rx="3" fill="url(#gRed)"/><rect x="973" y="377" width="6.6" height="3" fill="#ffd0d0"/><rect x="971.7" y="394.3" width="9.7" height="14.3" rx="3" fill="#cc5050"/><rect x="973" y="395.5" width="7" height="12" rx="2" fill="#333"/><path d="M976.5 396 V407" stroke="#88a" stroke-width="1.2"/><path d="M968.8 426.5 C968.5 423.5 970.3 423 972.3 422.7 L974.3 420.2 C976.8 419.4 979.8 419.5 981.3 421 L982.8 423 C984.8 423.5 985.5999999999999 424.5 985.3 427 Z" fill="url(#gRed)"/><circle cx="972.3" cy="427" r="1.6" fill="#333"/><circle cx="981.3" cy="427" r="1.6" fill="#333"/><path d="M966.8 428.5 H986.8" stroke="#555" stroke-width="0.6"/><path d="M971.7 450 C971.7 445 973 442.3 976.8 442.3 C980.6 442.3 982 445 982 450 Z" fill="url(#gRed)"/><path d="M969 451 H985" stroke="#555" stroke-width="0.7"/><circle cx="973.5" cy="446.5" r="0.9" fill="#f6a"/><circle cx="980" cy="446.5" r="0.9" fill="#f6a"/><path d="M968.3 472.5 C968.0 469.5 969.8 469 971.8 468.7 L973.8 466.2 C976.3 465.4 979.3 465.5 980.8 467 L982.3 469 C984.3 469.5 985.0999999999999 470.5 984.8 473 Z" fill="url(#gRed)"/><circle cx="971.8" cy="473" r="1.6" fill="#333"/><circle cx="980.8" cy="473" r="1.6" fill="#333"/><path d="M966.3 474.5 H986.3" stroke="#555" stroke-width="0.6"/><path d="M969.7 497.5 C969.7 491 972 489.7 976.8 489.7 C981.5 489.7 984 491 984 497.5 Z" fill="url(#gRed)"/><path d="M968 498 H986" stroke="#555" stroke-width="0.7"/><path d="M970 520 L976 511.5 L984 511 L984.7 516 L978 522.5 L971 523 Z" fill="url(#gRed)"/><path d="M975 515 L979 513.5 M977 518 L981 516" stroke="#fcc" stroke-width="1"/><path d="M974.3 535.8 L977 531 H984 V535.8 Z" fill="#777" stroke="#333" stroke-width="0.6"/><rect x="984" y="530" width="2.5" height="5.8" fill="#111"/><path d="M967.6 547.0 C967.3000000000001 544.0 969.1 543.5 971.1 543.2 L973.1 540.7 C975.6 539.9 978.6 540.0 980.1 541.5 L981.6 543.5 C983.6 544.0 984.4 545.0 984.1 547.5 Z" fill="#8a8a8a"/><circle cx="971.1" cy="547.5" r="1.6" fill="#333"/><circle cx="980.1" cy="547.5" r="1.6" fill="#333"/><path d="M965.6 549.0 H985.6" stroke="#555" stroke-width="0.6"/><rect x="974.3" y="553.3" width="11.7" height="11.7" fill="#6e6e58" stroke="#333" stroke-width="0.8"/><rect x="976" y="554.5" width="8" height="4.5" fill="#ddd"/><path d="M967.6 570.0 C967.3000000000001 567.0 969.1 566.5 971.1 566.2 L973.1 563.7 C975.6 562.9 978.6 563.0 980.1 564.5 L981.6 566.5 C983.6 567.0 984.4 568.0 984.1 570.5 Z" fill="#8a8a8a"/><circle cx="971.1" cy="570.5" r="1.6" fill="#333"/><circle cx="980.1" cy="570.5" r="1.6" fill="#333"/><path d="M965.6 572.0 H985.6" stroke="#555" stroke-width="0.6"/><path d="M967.5 595 L969 583 H975 L977 585 H983 L985.5 588 L982 595 Z" fill="url(#gFold)" stroke="#3a2a00" stroke-width="0.9"/><path d="M978 586 L984 580 L986 582 Z" fill="#555"/><circle cx="976.3" cy="608.3" r="5.5" fill="none" stroke="#222" stroke-width="1.1"/><path d="M968.2 608.3 H971.5 M981 608.3 H984.5 M976.3 600.5 V603.5 M976.3 613 V616" stroke="#222" stroke-width="1.1"/><rect x="975" y="607" width="2.6" height="2.6" fill="none" stroke="#222" stroke-width="0.7"/><path d="M973.2 630.0L985.5 633.2M973.2 630.0L967.3 638.4M971.7 632.1L984.0 635.5M976.3 630.8L970.4 639.4M970.2 634.2L982.6 637.8M979.4 631.6L973.5 640.3M968.8 636.3L981.2 640.0M982.4 632.4L976.6 641.3M967.3 638.4L979.7 642.3M985.5 633.2L979.7 642.3" stroke="#8c8c8c" stroke-width="0.75" fill="none"/><path d="M976.4 636.0L979.4 631.6" stroke="#40a040" stroke-width="1"/><path d="M976.4 636.0L982.6 637.8" stroke="#d84040" stroke-width="1"/><path d="M975 622 H978 V627 H980 L976.5 631 L973 627 H975 Z" fill="#fff" stroke="#111" stroke-width="0.7"/><path d="M967 650 L975 646 L985.5 648.5 V657 L978 664 L967.5 658 Z" fill="#ccc" stroke="#222" stroke-width="1"/><path d="M967 650 L976 653.5 L985.5 648.5 M976 653.5 L978 664" stroke="#222" stroke-width="1" fill="none"/><path d="M976 653.5 L985.5 648.5 V657 L978 664 Z" fill="#777"/><circle cx="967.5" cy="650" r="1.6" fill="#fff" stroke="#222" stroke-width="0.8"/><circle cx="985" cy="649" r="1.6" fill="#fff" stroke="#222" stroke-width="0.8"/><circle cx="967.8" cy="658" r="1.6" fill="#fff" stroke="#222" stroke-width="0.8"/><circle cx="978" cy="664" r="1.6" fill="#fff" stroke="#222" stroke-width="0.8"/><rect x="968" y="675.5" width="16.5" height="3" fill="#f4f4f4" stroke="#222" stroke-width="0.8"/><path d="M973 669 H980 L979 675 H974 Z M974 679 H979 L980 682.4 H973 Z" fill="#5a60c0" stroke="#222" stroke-width="0.7"/><path d="M976.3 667.5 V684" stroke="#222" stroke-width="0.8"/></svg></div></body></html>
